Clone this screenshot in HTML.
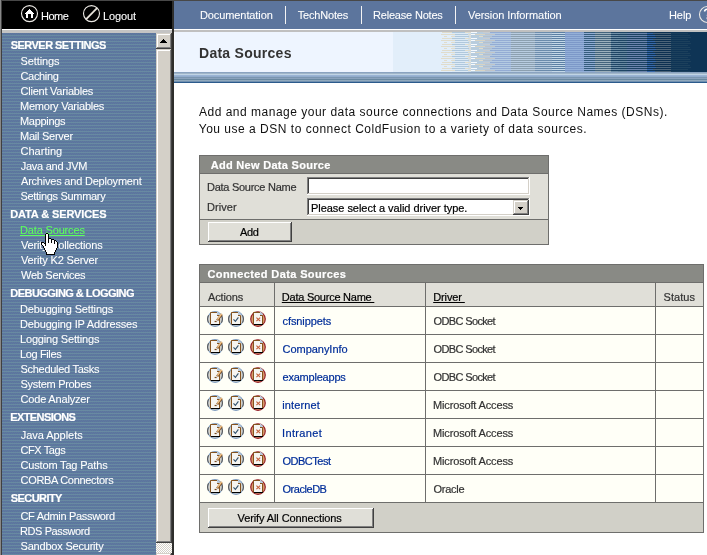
<!DOCTYPE html>
<html><head><meta charset="utf-8"><title>ColdFusion Administrator</title>
<style>
html,body{margin:0;padding:0;}
body{width:707px;height:555px;overflow:hidden;background:#fff;position:relative;font-family:'Liberation Sans',sans-serif;}
#p{position:absolute;left:0;top:0;width:707px;height:555px;overflow:hidden;will-change:transform;}
#p div,#p svg,#p span{position:absolute;}
.t{white-space:pre;}
</style></head><body><div id="p">
<div style="left:0px;top:0px;width:707px;height:1px;background:#484848;"></div>
<div style="left:0px;top:0px;width:1px;height:555px;background:#888888;"></div>
<div style="left:1px;top:0px;width:1px;height:555px;background:#404040;"></div>
<div style="left:2px;top:1px;width:170px;height:28px;background:#000;"></div>
<div style="left:174px;top:1px;width:533px;height:28px;background:#5C759D;"></div>
<div style="left:2px;top:29px;width:170px;height:1px;background:#fff;"></div>
<div style="left:2px;top:30px;width:170px;height:3px;background:#C3C3C3;"></div>
<div style="left:174px;top:29px;width:533px;height:1px;background:#fff;"></div>
<div style="left:174px;top:30px;width:533px;height:2px;background:#C0C0C0;"></div>
<div style="left:172px;top:1px;width:2px;height:554px;background:#2E2E2C;"></div>
<svg style="left:2px;top:33px" width="154" height="522" shape-rendering="crispEdges"><defs><pattern id="sb" width="2" height="6" patternUnits="userSpaceOnUse"><rect x="0" y="0" width="1" height="1" fill="#5B73A1"/><rect x="1" y="0" width="1" height="1" fill="#5F7B9C"/><rect x="0" y="1" width="1" height="1" fill="#5F7B9C"/><rect x="1" y="1" width="1" height="1" fill="#5B73A1"/><rect x="0" y="2" width="1" height="1" fill="#688AA2"/><rect x="1" y="2" width="1" height="1" fill="#688AA2"/><rect x="0" y="3" width="1" height="1" fill="#5F7B9C"/><rect x="1" y="3" width="1" height="1" fill="#5B73A1"/><rect x="0" y="4" width="1" height="1" fill="#5B73A1"/><rect x="1" y="4" width="1" height="1" fill="#5F7B9C"/><rect x="0" y="5" width="1" height="1" fill="#688AA2"/><rect x="1" y="5" width="1" height="1" fill="#688AA2"/></pattern></defs><rect width="154" height="522" fill="url(#sb)"/></svg>
<div style="left:156px;top:33px;width:16px;height:522px;background:#D4D0C8;"></div>
<div style="left:156px;top:543px;width:16px;height:10px;background-color:#fff;background-image:linear-gradient(45deg,#D4D0C8 25%,transparent 25%,transparent 75%,#D4D0C8 75%),linear-gradient(45deg,#D4D0C8 25%,transparent 25%,transparent 75%,#D4D0C8 75%);background-size:2px 2px;background-position:0 0,1px 1px;"></div>
<div style="left:156px;top:33px;width:16px;height:16px;background:#D4D0C8;"></div><div style="left:156px;top:33px;width:15px;height:1px;background:#D4D0C8;"></div><div style="left:156px;top:33px;width:1px;height:15px;background:#D4D0C8;"></div><div style="left:157px;top:34px;width:14px;height:1px;background:#fff;"></div><div style="left:157px;top:34px;width:1px;height:14px;background:#fff;"></div><div style="left:171px;top:33px;width:1px;height:16px;background:#404040;"></div><div style="left:156px;top:48px;width:16px;height:1px;background:#404040;"></div><div style="left:170px;top:34px;width:1px;height:14px;background:#808080;"></div><div style="left:157px;top:47px;width:14px;height:1px;background:#808080;"></div>
<div style="left:156px;top:49px;width:16px;height:494px;background:#D4D0C8;"></div><div style="left:156px;top:49px;width:15px;height:1px;background:#D4D0C8;"></div><div style="left:156px;top:49px;width:1px;height:493px;background:#D4D0C8;"></div><div style="left:157px;top:50px;width:14px;height:1px;background:#fff;"></div><div style="left:157px;top:50px;width:1px;height:492px;background:#fff;"></div><div style="left:171px;top:49px;width:1px;height:494px;background:#404040;"></div><div style="left:156px;top:542px;width:16px;height:1px;background:#404040;"></div><div style="left:170px;top:50px;width:1px;height:492px;background:#808080;"></div><div style="left:157px;top:541px;width:14px;height:1px;background:#808080;"></div>
<div style="left:156px;top:553px;width:16px;height:16px;background:#D4D0C8;"></div><div style="left:156px;top:553px;width:15px;height:1px;background:#D4D0C8;"></div><div style="left:156px;top:553px;width:1px;height:15px;background:#D4D0C8;"></div><div style="left:157px;top:554px;width:14px;height:1px;background:#fff;"></div><div style="left:157px;top:554px;width:1px;height:14px;background:#fff;"></div><div style="left:171px;top:553px;width:1px;height:16px;background:#404040;"></div><div style="left:156px;top:568px;width:16px;height:1px;background:#404040;"></div><div style="left:170px;top:554px;width:1px;height:14px;background:#808080;"></div><div style="left:157px;top:567px;width:14px;height:1px;background:#808080;"></div>
<svg style="left:160px;top:39px" width="8" height="5" shape-rendering="crispEdges"><path d="M3 0h1v1h1v1h1v1h1v1H0V3h1V2h1V1h1z" fill="#000"/></svg>
<div style="left:174px;top:32px;width:533px;height:40px;background:#EEF5FF;"></div>
<div style="left:174px;top:32px;width:1px;height:40px;background:#F8FBFF;"></div>
<div style="left:393px;top:32px;width:48px;height:40px;background:#E2EEFA;"></div>
<svg style="left:441px;top:32px" width="266" height="40" shape-rendering="crispEdges"><rect x="0" y="0" width="1" height="1" fill="#E2EEFA"/><rect x="1" y="0" width="10" height="1" fill="#E0DCCC"/><rect x="11" y="0" width="13" height="1" fill="#B0C8DC"/><rect x="24" y="0" width="6" height="1" fill="#E0DCCC"/><rect x="30" y="0" width="6" height="1" fill="#F6FAFE"/><rect x="36" y="0" width="6" height="1" fill="#B8CCDC"/><rect x="42" y="0" width="7" height="1" fill="#C8CCD0"/><rect x="49" y="0" width="21" height="1" fill="#94ACD4"/><rect x="70" y="0" width="24" height="1" fill="#8CA0B0"/><rect x="94" y="0" width="17" height="1" fill="#6C8CAC"/><rect x="111" y="0" width="13" height="1" fill="#5C80A4"/><rect x="124" y="0" width="19" height="1" fill="#7C98C8"/><rect x="143" y="0" width="11" height="1" fill="#345C7C"/><rect x="154" y="0" width="16" height="1" fill="#44647C"/><rect x="170" y="0" width="16" height="1" fill="#1E4464"/><rect x="186" y="0" width="20" height="1" fill="#1C4262"/><rect x="206" y="0" width="8" height="1" fill="#0E3456"/><rect x="214" y="0" width="16" height="1" fill="#0C3050"/><rect x="230" y="0" width="36" height="1" fill="#0E3455"/><rect x="0" y="1" width="11" height="1" fill="#E2EEFA"/><rect x="11" y="1" width="16" height="1" fill="#DCEAF6"/><rect x="27" y="1" width="3" height="1" fill="#D0E0EE"/><rect x="30" y="1" width="12" height="1" fill="#B8CDDE"/><rect x="42" y="1" width="7" height="1" fill="#B8CADC"/><rect x="49" y="1" width="21" height="1" fill="#B4CAE2"/><rect x="70" y="1" width="24" height="1" fill="#B8CCE0"/><rect x="94" y="1" width="17" height="1" fill="#B4C8DC"/><rect x="111" y="1" width="13" height="1" fill="#C4D8E8"/><rect x="124" y="1" width="19" height="1" fill="#94B0D8"/><rect x="143" y="1" width="11" height="1" fill="#90ACD4"/><rect x="154" y="1" width="16" height="1" fill="#9CB0BC"/><rect x="170" y="1" width="9" height="1" fill="#7090A8"/><rect x="179" y="1" width="7" height="1" fill="#6888A0"/><rect x="186" y="1" width="20" height="1" fill="#6C84AC"/><rect x="206" y="1" width="6" height="1" fill="#3868A8"/><rect x="212" y="1" width="18" height="1" fill="#4C6478"/><rect x="230" y="1" width="17" height="1" fill="#1C405C"/><rect x="247" y="1" width="19" height="1" fill="#0E3455"/><rect x="0" y="2" width="14" height="1" fill="#E0DCCC"/><rect x="14" y="2" width="13" height="1" fill="#B0C8DC"/><rect x="27" y="2" width="3" height="1" fill="#E0DCCC"/><rect x="30" y="2" width="4" height="1" fill="#F6FAFE"/><rect x="34" y="2" width="10" height="1" fill="#D8D4C4"/><rect x="44" y="2" width="10" height="1" fill="#C0C4C8"/><rect x="54" y="2" width="16" height="1" fill="#94ACD4"/><rect x="70" y="2" width="24" height="1" fill="#8CA0B0"/><rect x="94" y="2" width="17" height="1" fill="#6C8CAC"/><rect x="111" y="2" width="13" height="1" fill="#5C80A4"/><rect x="124" y="2" width="19" height="1" fill="#7C98C8"/><rect x="143" y="2" width="11" height="1" fill="#345C7C"/><rect x="154" y="2" width="16" height="1" fill="#44647C"/><rect x="170" y="2" width="16" height="1" fill="#1E4464"/><rect x="186" y="2" width="20" height="1" fill="#1C4262"/><rect x="206" y="2" width="8" height="1" fill="#0E3456"/><rect x="214" y="2" width="16" height="1" fill="#0C3050"/><rect x="230" y="2" width="36" height="1" fill="#0E3455"/><rect x="0" y="3" width="11" height="1" fill="#E2EEFA"/><rect x="11" y="3" width="16" height="1" fill="#DCEAF6"/><rect x="27" y="3" width="3" height="1" fill="#D0E0EE"/><rect x="30" y="3" width="12" height="1" fill="#B8CDDE"/><rect x="42" y="3" width="7" height="1" fill="#B8CADC"/><rect x="49" y="3" width="21" height="1" fill="#B4CAE2"/><rect x="70" y="3" width="24" height="1" fill="#B8CCE0"/><rect x="94" y="3" width="17" height="1" fill="#B4C8DC"/><rect x="111" y="3" width="13" height="1" fill="#C4D8E8"/><rect x="124" y="3" width="19" height="1" fill="#94B0D8"/><rect x="143" y="3" width="11" height="1" fill="#90ACD4"/><rect x="154" y="3" width="16" height="1" fill="#9CB0BC"/><rect x="170" y="3" width="7" height="1" fill="#7090A8"/><rect x="177" y="3" width="9" height="1" fill="#6888A0"/><rect x="186" y="3" width="20" height="1" fill="#6C84AC"/><rect x="206" y="3" width="8" height="1" fill="#3868A8"/><rect x="214" y="3" width="16" height="1" fill="#4C6478"/><rect x="230" y="3" width="19" height="1" fill="#1C405C"/><rect x="249" y="3" width="17" height="1" fill="#0E3455"/><rect x="0" y="4" width="3" height="1" fill="#E2EEFA"/><rect x="3" y="4" width="3" height="1" fill="#E0DCCC"/><rect x="6" y="4" width="4" height="1" fill="#E2EEFA"/><rect x="10" y="4" width="4" height="1" fill="#E0DCCC"/><rect x="14" y="4" width="14" height="1" fill="#B0C8DC"/><rect x="28" y="4" width="2" height="1" fill="#E0DCCC"/><rect x="30" y="4" width="8" height="1" fill="#B8CCDC"/><rect x="38" y="4" width="4" height="1" fill="#E0DCCC"/><rect x="42" y="4" width="9" height="1" fill="#B4C0CC"/><rect x="51" y="4" width="19" height="1" fill="#94ACD4"/><rect x="70" y="4" width="24" height="1" fill="#8CA0B0"/><rect x="94" y="4" width="17" height="1" fill="#6C8CAC"/><rect x="111" y="4" width="13" height="1" fill="#5C80A4"/><rect x="124" y="4" width="19" height="1" fill="#7C98C8"/><rect x="143" y="4" width="11" height="1" fill="#345C7C"/><rect x="154" y="4" width="16" height="1" fill="#44647C"/><rect x="170" y="4" width="16" height="1" fill="#1E4464"/><rect x="186" y="4" width="20" height="1" fill="#1C4262"/><rect x="206" y="4" width="8" height="1" fill="#0E3456"/><rect x="214" y="4" width="16" height="1" fill="#0C3050"/><rect x="230" y="4" width="36" height="1" fill="#0E3455"/><rect x="0" y="5" width="11" height="1" fill="#E2EEFA"/><rect x="11" y="5" width="16" height="1" fill="#DCEAF6"/><rect x="27" y="5" width="3" height="1" fill="#D0E0EE"/><rect x="30" y="5" width="12" height="1" fill="#B8CDDE"/><rect x="42" y="5" width="7" height="1" fill="#B8CADC"/><rect x="49" y="5" width="21" height="1" fill="#B4CAE2"/><rect x="70" y="5" width="24" height="1" fill="#B8CCE0"/><rect x="94" y="5" width="17" height="1" fill="#B4C8DC"/><rect x="111" y="5" width="13" height="1" fill="#C4D8E8"/><rect x="124" y="5" width="19" height="1" fill="#94B0D8"/><rect x="143" y="5" width="11" height="1" fill="#90ACD4"/><rect x="154" y="5" width="16" height="1" fill="#9CB0BC"/><rect x="170" y="5" width="9" height="1" fill="#7090A8"/><rect x="179" y="5" width="7" height="1" fill="#6888A0"/><rect x="186" y="5" width="20" height="1" fill="#6C84AC"/><rect x="206" y="5" width="9" height="1" fill="#3868A8"/><rect x="215" y="5" width="15" height="1" fill="#4C6478"/><rect x="230" y="5" width="20" height="1" fill="#1C405C"/><rect x="250" y="5" width="16" height="1" fill="#0E3455"/><rect x="0" y="6" width="1" height="1" fill="#E2EEFA"/><rect x="1" y="6" width="10" height="1" fill="#E0DCCC"/><rect x="11" y="6" width="13" height="1" fill="#B0C8DC"/><rect x="24" y="6" width="6" height="1" fill="#E0DCCC"/><rect x="30" y="6" width="6" height="1" fill="#F6FAFE"/><rect x="36" y="6" width="6" height="1" fill="#B8CCDC"/><rect x="42" y="6" width="7" height="1" fill="#C8CCD0"/><rect x="49" y="6" width="21" height="1" fill="#94ACD4"/><rect x="70" y="6" width="24" height="1" fill="#8CA0B0"/><rect x="94" y="6" width="17" height="1" fill="#6C8CAC"/><rect x="111" y="6" width="13" height="1" fill="#5C80A4"/><rect x="124" y="6" width="19" height="1" fill="#7C98C8"/><rect x="143" y="6" width="11" height="1" fill="#345C7C"/><rect x="154" y="6" width="16" height="1" fill="#44647C"/><rect x="170" y="6" width="16" height="1" fill="#1E4464"/><rect x="186" y="6" width="20" height="1" fill="#1C4262"/><rect x="206" y="6" width="8" height="1" fill="#0E3456"/><rect x="214" y="6" width="16" height="1" fill="#0C3050"/><rect x="230" y="6" width="36" height="1" fill="#0E3455"/><rect x="0" y="7" width="11" height="1" fill="#E2EEFA"/><rect x="11" y="7" width="16" height="1" fill="#DCEAF6"/><rect x="27" y="7" width="3" height="1" fill="#D0E0EE"/><rect x="30" y="7" width="12" height="1" fill="#B8CDDE"/><rect x="42" y="7" width="7" height="1" fill="#B8CADC"/><rect x="49" y="7" width="21" height="1" fill="#B4CAE2"/><rect x="70" y="7" width="24" height="1" fill="#B8CCE0"/><rect x="94" y="7" width="17" height="1" fill="#B4C8DC"/><rect x="111" y="7" width="13" height="1" fill="#C4D8E8"/><rect x="124" y="7" width="19" height="1" fill="#94B0D8"/><rect x="143" y="7" width="11" height="1" fill="#90ACD4"/><rect x="154" y="7" width="16" height="1" fill="#9CB0BC"/><rect x="170" y="7" width="9" height="1" fill="#7090A8"/><rect x="179" y="7" width="7" height="1" fill="#6888A0"/><rect x="186" y="7" width="20" height="1" fill="#6C84AC"/><rect x="206" y="7" width="6" height="1" fill="#3868A8"/><rect x="212" y="7" width="18" height="1" fill="#4C6478"/><rect x="230" y="7" width="17" height="1" fill="#1C405C"/><rect x="247" y="7" width="19" height="1" fill="#0E3455"/><rect x="0" y="8" width="14" height="1" fill="#E0DCCC"/><rect x="14" y="8" width="13" height="1" fill="#B0C8DC"/><rect x="27" y="8" width="3" height="1" fill="#E0DCCC"/><rect x="30" y="8" width="4" height="1" fill="#F6FAFE"/><rect x="34" y="8" width="10" height="1" fill="#D8D4C4"/><rect x="44" y="8" width="10" height="1" fill="#C0C4C8"/><rect x="54" y="8" width="16" height="1" fill="#94ACD4"/><rect x="70" y="8" width="24" height="1" fill="#8CA0B0"/><rect x="94" y="8" width="17" height="1" fill="#6C8CAC"/><rect x="111" y="8" width="13" height="1" fill="#5C80A4"/><rect x="124" y="8" width="19" height="1" fill="#7C98C8"/><rect x="143" y="8" width="11" height="1" fill="#345C7C"/><rect x="154" y="8" width="16" height="1" fill="#44647C"/><rect x="170" y="8" width="16" height="1" fill="#1E4464"/><rect x="186" y="8" width="20" height="1" fill="#1C4262"/><rect x="206" y="8" width="8" height="1" fill="#0E3456"/><rect x="214" y="8" width="16" height="1" fill="#0C3050"/><rect x="230" y="8" width="36" height="1" fill="#0E3455"/><rect x="0" y="9" width="11" height="1" fill="#E2EEFA"/><rect x="11" y="9" width="16" height="1" fill="#DCEAF6"/><rect x="27" y="9" width="3" height="1" fill="#D0E0EE"/><rect x="30" y="9" width="12" height="1" fill="#B8CDDE"/><rect x="42" y="9" width="7" height="1" fill="#B8CADC"/><rect x="49" y="9" width="21" height="1" fill="#B4CAE2"/><rect x="70" y="9" width="24" height="1" fill="#B8CCE0"/><rect x="94" y="9" width="17" height="1" fill="#B4C8DC"/><rect x="111" y="9" width="13" height="1" fill="#C4D8E8"/><rect x="124" y="9" width="19" height="1" fill="#94B0D8"/><rect x="143" y="9" width="11" height="1" fill="#90ACD4"/><rect x="154" y="9" width="16" height="1" fill="#9CB0BC"/><rect x="170" y="9" width="7" height="1" fill="#7090A8"/><rect x="177" y="9" width="9" height="1" fill="#6888A0"/><rect x="186" y="9" width="20" height="1" fill="#6C84AC"/><rect x="206" y="9" width="8" height="1" fill="#3868A8"/><rect x="214" y="9" width="16" height="1" fill="#4C6478"/><rect x="230" y="9" width="19" height="1" fill="#1C405C"/><rect x="249" y="9" width="17" height="1" fill="#0E3455"/><rect x="0" y="10" width="3" height="1" fill="#E2EEFA"/><rect x="3" y="10" width="3" height="1" fill="#E0DCCC"/><rect x="6" y="10" width="4" height="1" fill="#E2EEFA"/><rect x="10" y="10" width="4" height="1" fill="#E0DCCC"/><rect x="14" y="10" width="14" height="1" fill="#B0C8DC"/><rect x="28" y="10" width="2" height="1" fill="#E0DCCC"/><rect x="30" y="10" width="8" height="1" fill="#B8CCDC"/><rect x="38" y="10" width="4" height="1" fill="#E0DCCC"/><rect x="42" y="10" width="9" height="1" fill="#B4C0CC"/><rect x="51" y="10" width="19" height="1" fill="#94ACD4"/><rect x="70" y="10" width="24" height="1" fill="#8CA0B0"/><rect x="94" y="10" width="17" height="1" fill="#6C8CAC"/><rect x="111" y="10" width="13" height="1" fill="#5C80A4"/><rect x="124" y="10" width="19" height="1" fill="#7C98C8"/><rect x="143" y="10" width="11" height="1" fill="#345C7C"/><rect x="154" y="10" width="16" height="1" fill="#44647C"/><rect x="170" y="10" width="16" height="1" fill="#1E4464"/><rect x="186" y="10" width="20" height="1" fill="#1C4262"/><rect x="206" y="10" width="8" height="1" fill="#0E3456"/><rect x="214" y="10" width="16" height="1" fill="#0C3050"/><rect x="230" y="10" width="36" height="1" fill="#0E3455"/><rect x="0" y="11" width="11" height="1" fill="#E2EEFA"/><rect x="11" y="11" width="16" height="1" fill="#DCEAF6"/><rect x="27" y="11" width="3" height="1" fill="#D0E0EE"/><rect x="30" y="11" width="12" height="1" fill="#B8CDDE"/><rect x="42" y="11" width="7" height="1" fill="#B8CADC"/><rect x="49" y="11" width="21" height="1" fill="#B4CAE2"/><rect x="70" y="11" width="24" height="1" fill="#B8CCE0"/><rect x="94" y="11" width="17" height="1" fill="#B4C8DC"/><rect x="111" y="11" width="13" height="1" fill="#C4D8E8"/><rect x="124" y="11" width="19" height="1" fill="#94B0D8"/><rect x="143" y="11" width="11" height="1" fill="#90ACD4"/><rect x="154" y="11" width="16" height="1" fill="#9CB0BC"/><rect x="170" y="11" width="9" height="1" fill="#7090A8"/><rect x="179" y="11" width="7" height="1" fill="#6888A0"/><rect x="186" y="11" width="20" height="1" fill="#6C84AC"/><rect x="206" y="11" width="9" height="1" fill="#3868A8"/><rect x="215" y="11" width="15" height="1" fill="#4C6478"/><rect x="230" y="11" width="20" height="1" fill="#1C405C"/><rect x="250" y="11" width="16" height="1" fill="#0E3455"/><rect x="0" y="12" width="1" height="1" fill="#E2EEFA"/><rect x="1" y="12" width="10" height="1" fill="#E0DCCC"/><rect x="11" y="12" width="13" height="1" fill="#B0C8DC"/><rect x="24" y="12" width="6" height="1" fill="#E0DCCC"/><rect x="30" y="12" width="6" height="1" fill="#F6FAFE"/><rect x="36" y="12" width="6" height="1" fill="#B8CCDC"/><rect x="42" y="12" width="7" height="1" fill="#C8CCD0"/><rect x="49" y="12" width="21" height="1" fill="#94ACD4"/><rect x="70" y="12" width="24" height="1" fill="#8CA0B0"/><rect x="94" y="12" width="17" height="1" fill="#6C8CAC"/><rect x="111" y="12" width="13" height="1" fill="#5C80A4"/><rect x="124" y="12" width="19" height="1" fill="#7C98C8"/><rect x="143" y="12" width="11" height="1" fill="#345C7C"/><rect x="154" y="12" width="16" height="1" fill="#44647C"/><rect x="170" y="12" width="16" height="1" fill="#1E4464"/><rect x="186" y="12" width="20" height="1" fill="#1C4262"/><rect x="206" y="12" width="8" height="1" fill="#0E3456"/><rect x="214" y="12" width="16" height="1" fill="#0C3050"/><rect x="230" y="12" width="36" height="1" fill="#0E3455"/><rect x="0" y="13" width="11" height="1" fill="#E2EEFA"/><rect x="11" y="13" width="16" height="1" fill="#DCEAF6"/><rect x="27" y="13" width="3" height="1" fill="#D0E0EE"/><rect x="30" y="13" width="12" height="1" fill="#B8CDDE"/><rect x="42" y="13" width="7" height="1" fill="#B8CADC"/><rect x="49" y="13" width="21" height="1" fill="#B4CAE2"/><rect x="70" y="13" width="24" height="1" fill="#B8CCE0"/><rect x="94" y="13" width="17" height="1" fill="#B4C8DC"/><rect x="111" y="13" width="13" height="1" fill="#C4D8E8"/><rect x="124" y="13" width="19" height="1" fill="#94B0D8"/><rect x="143" y="13" width="11" height="1" fill="#90ACD4"/><rect x="154" y="13" width="16" height="1" fill="#9CB0BC"/><rect x="170" y="13" width="9" height="1" fill="#7090A8"/><rect x="179" y="13" width="7" height="1" fill="#6888A0"/><rect x="186" y="13" width="20" height="1" fill="#6C84AC"/><rect x="206" y="13" width="6" height="1" fill="#3868A8"/><rect x="212" y="13" width="18" height="1" fill="#4C6478"/><rect x="230" y="13" width="17" height="1" fill="#1C405C"/><rect x="247" y="13" width="19" height="1" fill="#0E3455"/><rect x="0" y="14" width="14" height="1" fill="#E0DCCC"/><rect x="14" y="14" width="13" height="1" fill="#B0C8DC"/><rect x="27" y="14" width="3" height="1" fill="#E0DCCC"/><rect x="30" y="14" width="4" height="1" fill="#F6FAFE"/><rect x="34" y="14" width="10" height="1" fill="#D8D4C4"/><rect x="44" y="14" width="10" height="1" fill="#C0C4C8"/><rect x="54" y="14" width="16" height="1" fill="#94ACD4"/><rect x="70" y="14" width="24" height="1" fill="#8CA0B0"/><rect x="94" y="14" width="17" height="1" fill="#6C8CAC"/><rect x="111" y="14" width="13" height="1" fill="#5C80A4"/><rect x="124" y="14" width="19" height="1" fill="#7C98C8"/><rect x="143" y="14" width="11" height="1" fill="#345C7C"/><rect x="154" y="14" width="16" height="1" fill="#44647C"/><rect x="170" y="14" width="16" height="1" fill="#1E4464"/><rect x="186" y="14" width="20" height="1" fill="#1C4262"/><rect x="206" y="14" width="8" height="1" fill="#0E3456"/><rect x="214" y="14" width="16" height="1" fill="#0C3050"/><rect x="230" y="14" width="36" height="1" fill="#0E3455"/><rect x="0" y="15" width="11" height="1" fill="#E2EEFA"/><rect x="11" y="15" width="16" height="1" fill="#DCEAF6"/><rect x="27" y="15" width="3" height="1" fill="#D0E0EE"/><rect x="30" y="15" width="12" height="1" fill="#B8CDDE"/><rect x="42" y="15" width="7" height="1" fill="#B8CADC"/><rect x="49" y="15" width="21" height="1" fill="#B4CAE2"/><rect x="70" y="15" width="24" height="1" fill="#B8CCE0"/><rect x="94" y="15" width="17" height="1" fill="#B4C8DC"/><rect x="111" y="15" width="13" height="1" fill="#C4D8E8"/><rect x="124" y="15" width="19" height="1" fill="#94B0D8"/><rect x="143" y="15" width="11" height="1" fill="#90ACD4"/><rect x="154" y="15" width="16" height="1" fill="#9CB0BC"/><rect x="170" y="15" width="7" height="1" fill="#7090A8"/><rect x="177" y="15" width="9" height="1" fill="#6888A0"/><rect x="186" y="15" width="20" height="1" fill="#6C84AC"/><rect x="206" y="15" width="8" height="1" fill="#3868A8"/><rect x="214" y="15" width="16" height="1" fill="#4C6478"/><rect x="230" y="15" width="19" height="1" fill="#1C405C"/><rect x="249" y="15" width="17" height="1" fill="#0E3455"/><rect x="0" y="16" width="3" height="1" fill="#E2EEFA"/><rect x="3" y="16" width="3" height="1" fill="#E0DCCC"/><rect x="6" y="16" width="4" height="1" fill="#E2EEFA"/><rect x="10" y="16" width="4" height="1" fill="#E0DCCC"/><rect x="14" y="16" width="14" height="1" fill="#B0C8DC"/><rect x="28" y="16" width="2" height="1" fill="#E0DCCC"/><rect x="30" y="16" width="8" height="1" fill="#B8CCDC"/><rect x="38" y="16" width="4" height="1" fill="#E0DCCC"/><rect x="42" y="16" width="9" height="1" fill="#B4C0CC"/><rect x="51" y="16" width="19" height="1" fill="#94ACD4"/><rect x="70" y="16" width="24" height="1" fill="#8CA0B0"/><rect x="94" y="16" width="17" height="1" fill="#6C8CAC"/><rect x="111" y="16" width="13" height="1" fill="#5C80A4"/><rect x="124" y="16" width="19" height="1" fill="#7C98C8"/><rect x="143" y="16" width="11" height="1" fill="#345C7C"/><rect x="154" y="16" width="16" height="1" fill="#44647C"/><rect x="170" y="16" width="16" height="1" fill="#1E4464"/><rect x="186" y="16" width="20" height="1" fill="#1C4262"/><rect x="206" y="16" width="8" height="1" fill="#0E3456"/><rect x="214" y="16" width="16" height="1" fill="#0C3050"/><rect x="230" y="16" width="36" height="1" fill="#0E3455"/><rect x="0" y="17" width="11" height="1" fill="#E2EEFA"/><rect x="11" y="17" width="16" height="1" fill="#DCEAF6"/><rect x="27" y="17" width="3" height="1" fill="#D0E0EE"/><rect x="30" y="17" width="12" height="1" fill="#B8CDDE"/><rect x="42" y="17" width="7" height="1" fill="#B8CADC"/><rect x="49" y="17" width="21" height="1" fill="#B4CAE2"/><rect x="70" y="17" width="24" height="1" fill="#B8CCE0"/><rect x="94" y="17" width="17" height="1" fill="#B4C8DC"/><rect x="111" y="17" width="13" height="1" fill="#C4D8E8"/><rect x="124" y="17" width="19" height="1" fill="#94B0D8"/><rect x="143" y="17" width="11" height="1" fill="#90ACD4"/><rect x="154" y="17" width="16" height="1" fill="#9CB0BC"/><rect x="170" y="17" width="9" height="1" fill="#7090A8"/><rect x="179" y="17" width="7" height="1" fill="#6888A0"/><rect x="186" y="17" width="20" height="1" fill="#6C84AC"/><rect x="206" y="17" width="9" height="1" fill="#3868A8"/><rect x="215" y="17" width="15" height="1" fill="#4C6478"/><rect x="230" y="17" width="20" height="1" fill="#1C405C"/><rect x="250" y="17" width="16" height="1" fill="#0E3455"/><rect x="0" y="18" width="1" height="1" fill="#E2EEFA"/><rect x="1" y="18" width="10" height="1" fill="#E0DCCC"/><rect x="11" y="18" width="13" height="1" fill="#B0C8DC"/><rect x="24" y="18" width="6" height="1" fill="#E0DCCC"/><rect x="30" y="18" width="6" height="1" fill="#F6FAFE"/><rect x="36" y="18" width="6" height="1" fill="#B8CCDC"/><rect x="42" y="18" width="7" height="1" fill="#C8CCD0"/><rect x="49" y="18" width="21" height="1" fill="#94ACD4"/><rect x="70" y="18" width="24" height="1" fill="#8CA0B0"/><rect x="94" y="18" width="17" height="1" fill="#6C8CAC"/><rect x="111" y="18" width="13" height="1" fill="#5C80A4"/><rect x="124" y="18" width="19" height="1" fill="#7C98C8"/><rect x="143" y="18" width="11" height="1" fill="#345C7C"/><rect x="154" y="18" width="16" height="1" fill="#44647C"/><rect x="170" y="18" width="16" height="1" fill="#1E4464"/><rect x="186" y="18" width="20" height="1" fill="#1C4262"/><rect x="206" y="18" width="8" height="1" fill="#0E3456"/><rect x="214" y="18" width="16" height="1" fill="#0C3050"/><rect x="230" y="18" width="36" height="1" fill="#0E3455"/><rect x="0" y="19" width="11" height="1" fill="#E2EEFA"/><rect x="11" y="19" width="16" height="1" fill="#DCEAF6"/><rect x="27" y="19" width="3" height="1" fill="#D0E0EE"/><rect x="30" y="19" width="12" height="1" fill="#B8CDDE"/><rect x="42" y="19" width="7" height="1" fill="#B8CADC"/><rect x="49" y="19" width="21" height="1" fill="#B4CAE2"/><rect x="70" y="19" width="24" height="1" fill="#B8CCE0"/><rect x="94" y="19" width="17" height="1" fill="#B4C8DC"/><rect x="111" y="19" width="13" height="1" fill="#C4D8E8"/><rect x="124" y="19" width="19" height="1" fill="#94B0D8"/><rect x="143" y="19" width="11" height="1" fill="#90ACD4"/><rect x="154" y="19" width="16" height="1" fill="#9CB0BC"/><rect x="170" y="19" width="9" height="1" fill="#7090A8"/><rect x="179" y="19" width="7" height="1" fill="#6888A0"/><rect x="186" y="19" width="20" height="1" fill="#6C84AC"/><rect x="206" y="19" width="6" height="1" fill="#3868A8"/><rect x="212" y="19" width="18" height="1" fill="#4C6478"/><rect x="230" y="19" width="17" height="1" fill="#1C405C"/><rect x="247" y="19" width="19" height="1" fill="#0E3455"/><rect x="0" y="20" width="14" height="1" fill="#E0DCCC"/><rect x="14" y="20" width="13" height="1" fill="#B0C8DC"/><rect x="27" y="20" width="3" height="1" fill="#E0DCCC"/><rect x="30" y="20" width="4" height="1" fill="#F6FAFE"/><rect x="34" y="20" width="10" height="1" fill="#D8D4C4"/><rect x="44" y="20" width="10" height="1" fill="#C0C4C8"/><rect x="54" y="20" width="16" height="1" fill="#94ACD4"/><rect x="70" y="20" width="24" height="1" fill="#8CA0B0"/><rect x="94" y="20" width="17" height="1" fill="#6C8CAC"/><rect x="111" y="20" width="13" height="1" fill="#5C80A4"/><rect x="124" y="20" width="19" height="1" fill="#7C98C8"/><rect x="143" y="20" width="11" height="1" fill="#345C7C"/><rect x="154" y="20" width="16" height="1" fill="#44647C"/><rect x="170" y="20" width="16" height="1" fill="#1E4464"/><rect x="186" y="20" width="20" height="1" fill="#1C4262"/><rect x="206" y="20" width="8" height="1" fill="#0E3456"/><rect x="214" y="20" width="16" height="1" fill="#0C3050"/><rect x="230" y="20" width="36" height="1" fill="#0E3455"/><rect x="0" y="21" width="11" height="1" fill="#E2EEFA"/><rect x="11" y="21" width="16" height="1" fill="#DCEAF6"/><rect x="27" y="21" width="3" height="1" fill="#D0E0EE"/><rect x="30" y="21" width="12" height="1" fill="#B8CDDE"/><rect x="42" y="21" width="7" height="1" fill="#B8CADC"/><rect x="49" y="21" width="21" height="1" fill="#B4CAE2"/><rect x="70" y="21" width="24" height="1" fill="#B8CCE0"/><rect x="94" y="21" width="17" height="1" fill="#B4C8DC"/><rect x="111" y="21" width="13" height="1" fill="#C4D8E8"/><rect x="124" y="21" width="19" height="1" fill="#94B0D8"/><rect x="143" y="21" width="11" height="1" fill="#90ACD4"/><rect x="154" y="21" width="16" height="1" fill="#9CB0BC"/><rect x="170" y="21" width="7" height="1" fill="#7090A8"/><rect x="177" y="21" width="9" height="1" fill="#6888A0"/><rect x="186" y="21" width="20" height="1" fill="#6C84AC"/><rect x="206" y="21" width="8" height="1" fill="#3868A8"/><rect x="214" y="21" width="16" height="1" fill="#4C6478"/><rect x="230" y="21" width="19" height="1" fill="#1C405C"/><rect x="249" y="21" width="17" height="1" fill="#0E3455"/><rect x="0" y="22" width="3" height="1" fill="#E2EEFA"/><rect x="3" y="22" width="3" height="1" fill="#E0DCCC"/><rect x="6" y="22" width="4" height="1" fill="#E2EEFA"/><rect x="10" y="22" width="4" height="1" fill="#E0DCCC"/><rect x="14" y="22" width="14" height="1" fill="#B0C8DC"/><rect x="28" y="22" width="2" height="1" fill="#E0DCCC"/><rect x="30" y="22" width="8" height="1" fill="#B8CCDC"/><rect x="38" y="22" width="4" height="1" fill="#E0DCCC"/><rect x="42" y="22" width="9" height="1" fill="#B4C0CC"/><rect x="51" y="22" width="19" height="1" fill="#94ACD4"/><rect x="70" y="22" width="24" height="1" fill="#8CA0B0"/><rect x="94" y="22" width="17" height="1" fill="#6C8CAC"/><rect x="111" y="22" width="13" height="1" fill="#5C80A4"/><rect x="124" y="22" width="19" height="1" fill="#7C98C8"/><rect x="143" y="22" width="11" height="1" fill="#345C7C"/><rect x="154" y="22" width="16" height="1" fill="#44647C"/><rect x="170" y="22" width="16" height="1" fill="#1E4464"/><rect x="186" y="22" width="20" height="1" fill="#1C4262"/><rect x="206" y="22" width="8" height="1" fill="#0E3456"/><rect x="214" y="22" width="16" height="1" fill="#0C3050"/><rect x="230" y="22" width="36" height="1" fill="#0E3455"/><rect x="0" y="23" width="11" height="1" fill="#E2EEFA"/><rect x="11" y="23" width="16" height="1" fill="#DCEAF6"/><rect x="27" y="23" width="3" height="1" fill="#D0E0EE"/><rect x="30" y="23" width="12" height="1" fill="#B8CDDE"/><rect x="42" y="23" width="7" height="1" fill="#B8CADC"/><rect x="49" y="23" width="21" height="1" fill="#B4CAE2"/><rect x="70" y="23" width="24" height="1" fill="#B8CCE0"/><rect x="94" y="23" width="17" height="1" fill="#B4C8DC"/><rect x="111" y="23" width="13" height="1" fill="#C4D8E8"/><rect x="124" y="23" width="19" height="1" fill="#94B0D8"/><rect x="143" y="23" width="11" height="1" fill="#90ACD4"/><rect x="154" y="23" width="16" height="1" fill="#9CB0BC"/><rect x="170" y="23" width="9" height="1" fill="#7090A8"/><rect x="179" y="23" width="7" height="1" fill="#6888A0"/><rect x="186" y="23" width="20" height="1" fill="#6C84AC"/><rect x="206" y="23" width="9" height="1" fill="#3868A8"/><rect x="215" y="23" width="15" height="1" fill="#4C6478"/><rect x="230" y="23" width="20" height="1" fill="#1C405C"/><rect x="250" y="23" width="16" height="1" fill="#0E3455"/><rect x="0" y="24" width="1" height="1" fill="#E2EEFA"/><rect x="1" y="24" width="10" height="1" fill="#E0DCCC"/><rect x="11" y="24" width="13" height="1" fill="#B0C8DC"/><rect x="24" y="24" width="6" height="1" fill="#E0DCCC"/><rect x="30" y="24" width="6" height="1" fill="#F6FAFE"/><rect x="36" y="24" width="6" height="1" fill="#B8CCDC"/><rect x="42" y="24" width="7" height="1" fill="#C8CCD0"/><rect x="49" y="24" width="21" height="1" fill="#94ACD4"/><rect x="70" y="24" width="24" height="1" fill="#8CA0B0"/><rect x="94" y="24" width="17" height="1" fill="#6C8CAC"/><rect x="111" y="24" width="13" height="1" fill="#5C80A4"/><rect x="124" y="24" width="19" height="1" fill="#7C98C8"/><rect x="143" y="24" width="11" height="1" fill="#345C7C"/><rect x="154" y="24" width="16" height="1" fill="#44647C"/><rect x="170" y="24" width="16" height="1" fill="#1E4464"/><rect x="186" y="24" width="20" height="1" fill="#1C4262"/><rect x="206" y="24" width="8" height="1" fill="#0E3456"/><rect x="214" y="24" width="16" height="1" fill="#0C3050"/><rect x="230" y="24" width="36" height="1" fill="#0E3455"/><rect x="0" y="25" width="11" height="1" fill="#E2EEFA"/><rect x="11" y="25" width="16" height="1" fill="#DCEAF6"/><rect x="27" y="25" width="3" height="1" fill="#D0E0EE"/><rect x="30" y="25" width="12" height="1" fill="#B8CDDE"/><rect x="42" y="25" width="7" height="1" fill="#B8CADC"/><rect x="49" y="25" width="21" height="1" fill="#B4CAE2"/><rect x="70" y="25" width="24" height="1" fill="#B8CCE0"/><rect x="94" y="25" width="17" height="1" fill="#B4C8DC"/><rect x="111" y="25" width="13" height="1" fill="#C4D8E8"/><rect x="124" y="25" width="19" height="1" fill="#94B0D8"/><rect x="143" y="25" width="11" height="1" fill="#90ACD4"/><rect x="154" y="25" width="16" height="1" fill="#9CB0BC"/><rect x="170" y="25" width="9" height="1" fill="#7090A8"/><rect x="179" y="25" width="7" height="1" fill="#6888A0"/><rect x="186" y="25" width="20" height="1" fill="#6C84AC"/><rect x="206" y="25" width="6" height="1" fill="#3868A8"/><rect x="212" y="25" width="18" height="1" fill="#4C6478"/><rect x="230" y="25" width="17" height="1" fill="#1C405C"/><rect x="247" y="25" width="19" height="1" fill="#0E3455"/><rect x="0" y="26" width="14" height="1" fill="#E0DCCC"/><rect x="14" y="26" width="13" height="1" fill="#B0C8DC"/><rect x="27" y="26" width="3" height="1" fill="#E0DCCC"/><rect x="30" y="26" width="4" height="1" fill="#F6FAFE"/><rect x="34" y="26" width="10" height="1" fill="#D8D4C4"/><rect x="44" y="26" width="10" height="1" fill="#C0C4C8"/><rect x="54" y="26" width="16" height="1" fill="#94ACD4"/><rect x="70" y="26" width="24" height="1" fill="#8CA0B0"/><rect x="94" y="26" width="17" height="1" fill="#6C8CAC"/><rect x="111" y="26" width="13" height="1" fill="#5C80A4"/><rect x="124" y="26" width="19" height="1" fill="#7C98C8"/><rect x="143" y="26" width="11" height="1" fill="#345C7C"/><rect x="154" y="26" width="16" height="1" fill="#44647C"/><rect x="170" y="26" width="16" height="1" fill="#1E4464"/><rect x="186" y="26" width="20" height="1" fill="#1C4262"/><rect x="206" y="26" width="8" height="1" fill="#0E3456"/><rect x="214" y="26" width="16" height="1" fill="#0C3050"/><rect x="230" y="26" width="36" height="1" fill="#0E3455"/><rect x="0" y="27" width="11" height="1" fill="#E2EEFA"/><rect x="11" y="27" width="16" height="1" fill="#DCEAF6"/><rect x="27" y="27" width="3" height="1" fill="#D0E0EE"/><rect x="30" y="27" width="12" height="1" fill="#B8CDDE"/><rect x="42" y="27" width="7" height="1" fill="#B8CADC"/><rect x="49" y="27" width="21" height="1" fill="#B4CAE2"/><rect x="70" y="27" width="24" height="1" fill="#B8CCE0"/><rect x="94" y="27" width="17" height="1" fill="#B4C8DC"/><rect x="111" y="27" width="13" height="1" fill="#C4D8E8"/><rect x="124" y="27" width="19" height="1" fill="#94B0D8"/><rect x="143" y="27" width="11" height="1" fill="#90ACD4"/><rect x="154" y="27" width="16" height="1" fill="#9CB0BC"/><rect x="170" y="27" width="7" height="1" fill="#7090A8"/><rect x="177" y="27" width="9" height="1" fill="#6888A0"/><rect x="186" y="27" width="20" height="1" fill="#6C84AC"/><rect x="206" y="27" width="8" height="1" fill="#3868A8"/><rect x="214" y="27" width="16" height="1" fill="#4C6478"/><rect x="230" y="27" width="19" height="1" fill="#1C405C"/><rect x="249" y="27" width="17" height="1" fill="#0E3455"/><rect x="0" y="28" width="3" height="1" fill="#E2EEFA"/><rect x="3" y="28" width="3" height="1" fill="#E0DCCC"/><rect x="6" y="28" width="4" height="1" fill="#E2EEFA"/><rect x="10" y="28" width="4" height="1" fill="#E0DCCC"/><rect x="14" y="28" width="14" height="1" fill="#B0C8DC"/><rect x="28" y="28" width="2" height="1" fill="#E0DCCC"/><rect x="30" y="28" width="8" height="1" fill="#B8CCDC"/><rect x="38" y="28" width="4" height="1" fill="#E0DCCC"/><rect x="42" y="28" width="9" height="1" fill="#B4C0CC"/><rect x="51" y="28" width="19" height="1" fill="#94ACD4"/><rect x="70" y="28" width="24" height="1" fill="#8CA0B0"/><rect x="94" y="28" width="17" height="1" fill="#6C8CAC"/><rect x="111" y="28" width="13" height="1" fill="#5C80A4"/><rect x="124" y="28" width="19" height="1" fill="#7C98C8"/><rect x="143" y="28" width="11" height="1" fill="#345C7C"/><rect x="154" y="28" width="16" height="1" fill="#44647C"/><rect x="170" y="28" width="16" height="1" fill="#1E4464"/><rect x="186" y="28" width="20" height="1" fill="#1C4262"/><rect x="206" y="28" width="8" height="1" fill="#0E3456"/><rect x="214" y="28" width="16" height="1" fill="#0C3050"/><rect x="230" y="28" width="36" height="1" fill="#0E3455"/><rect x="0" y="29" width="11" height="1" fill="#E2EEFA"/><rect x="11" y="29" width="16" height="1" fill="#DCEAF6"/><rect x="27" y="29" width="3" height="1" fill="#D0E0EE"/><rect x="30" y="29" width="12" height="1" fill="#B8CDDE"/><rect x="42" y="29" width="7" height="1" fill="#B8CADC"/><rect x="49" y="29" width="21" height="1" fill="#B4CAE2"/><rect x="70" y="29" width="24" height="1" fill="#B8CCE0"/><rect x="94" y="29" width="17" height="1" fill="#B4C8DC"/><rect x="111" y="29" width="13" height="1" fill="#C4D8E8"/><rect x="124" y="29" width="19" height="1" fill="#94B0D8"/><rect x="143" y="29" width="11" height="1" fill="#90ACD4"/><rect x="154" y="29" width="16" height="1" fill="#9CB0BC"/><rect x="170" y="29" width="9" height="1" fill="#7090A8"/><rect x="179" y="29" width="7" height="1" fill="#6888A0"/><rect x="186" y="29" width="20" height="1" fill="#6C84AC"/><rect x="206" y="29" width="9" height="1" fill="#3868A8"/><rect x="215" y="29" width="15" height="1" fill="#4C6478"/><rect x="230" y="29" width="20" height="1" fill="#1C405C"/><rect x="250" y="29" width="16" height="1" fill="#0E3455"/><rect x="0" y="30" width="1" height="1" fill="#E2EEFA"/><rect x="1" y="30" width="10" height="1" fill="#E0DCCC"/><rect x="11" y="30" width="13" height="1" fill="#B0C8DC"/><rect x="24" y="30" width="6" height="1" fill="#E0DCCC"/><rect x="30" y="30" width="6" height="1" fill="#F6FAFE"/><rect x="36" y="30" width="6" height="1" fill="#B8CCDC"/><rect x="42" y="30" width="7" height="1" fill="#C8CCD0"/><rect x="49" y="30" width="21" height="1" fill="#94ACD4"/><rect x="70" y="30" width="24" height="1" fill="#8CA0B0"/><rect x="94" y="30" width="17" height="1" fill="#6C8CAC"/><rect x="111" y="30" width="13" height="1" fill="#5C80A4"/><rect x="124" y="30" width="19" height="1" fill="#7C98C8"/><rect x="143" y="30" width="11" height="1" fill="#345C7C"/><rect x="154" y="30" width="16" height="1" fill="#44647C"/><rect x="170" y="30" width="16" height="1" fill="#1E4464"/><rect x="186" y="30" width="20" height="1" fill="#1C4262"/><rect x="206" y="30" width="8" height="1" fill="#0E3456"/><rect x="214" y="30" width="16" height="1" fill="#0C3050"/><rect x="230" y="30" width="36" height="1" fill="#0E3455"/><rect x="0" y="31" width="11" height="1" fill="#E2EEFA"/><rect x="11" y="31" width="16" height="1" fill="#DCEAF6"/><rect x="27" y="31" width="3" height="1" fill="#D0E0EE"/><rect x="30" y="31" width="12" height="1" fill="#B8CDDE"/><rect x="42" y="31" width="7" height="1" fill="#B8CADC"/><rect x="49" y="31" width="21" height="1" fill="#B4CAE2"/><rect x="70" y="31" width="24" height="1" fill="#B8CCE0"/><rect x="94" y="31" width="17" height="1" fill="#B4C8DC"/><rect x="111" y="31" width="13" height="1" fill="#C4D8E8"/><rect x="124" y="31" width="19" height="1" fill="#94B0D8"/><rect x="143" y="31" width="11" height="1" fill="#90ACD4"/><rect x="154" y="31" width="16" height="1" fill="#9CB0BC"/><rect x="170" y="31" width="9" height="1" fill="#7090A8"/><rect x="179" y="31" width="7" height="1" fill="#6888A0"/><rect x="186" y="31" width="20" height="1" fill="#6C84AC"/><rect x="206" y="31" width="6" height="1" fill="#3868A8"/><rect x="212" y="31" width="18" height="1" fill="#4C6478"/><rect x="230" y="31" width="17" height="1" fill="#1C405C"/><rect x="247" y="31" width="19" height="1" fill="#0E3455"/><rect x="0" y="32" width="14" height="1" fill="#E0DCCC"/><rect x="14" y="32" width="13" height="1" fill="#B0C8DC"/><rect x="27" y="32" width="3" height="1" fill="#E0DCCC"/><rect x="30" y="32" width="4" height="1" fill="#F6FAFE"/><rect x="34" y="32" width="10" height="1" fill="#D8D4C4"/><rect x="44" y="32" width="10" height="1" fill="#C0C4C8"/><rect x="54" y="32" width="16" height="1" fill="#94ACD4"/><rect x="70" y="32" width="24" height="1" fill="#8CA0B0"/><rect x="94" y="32" width="17" height="1" fill="#6C8CAC"/><rect x="111" y="32" width="13" height="1" fill="#5C80A4"/><rect x="124" y="32" width="19" height="1" fill="#7C98C8"/><rect x="143" y="32" width="11" height="1" fill="#345C7C"/><rect x="154" y="32" width="16" height="1" fill="#44647C"/><rect x="170" y="32" width="16" height="1" fill="#1E4464"/><rect x="186" y="32" width="20" height="1" fill="#1C4262"/><rect x="206" y="32" width="8" height="1" fill="#0E3456"/><rect x="214" y="32" width="16" height="1" fill="#0C3050"/><rect x="230" y="32" width="36" height="1" fill="#0E3455"/><rect x="0" y="33" width="11" height="1" fill="#E2EEFA"/><rect x="11" y="33" width="16" height="1" fill="#DCEAF6"/><rect x="27" y="33" width="3" height="1" fill="#D0E0EE"/><rect x="30" y="33" width="12" height="1" fill="#B8CDDE"/><rect x="42" y="33" width="7" height="1" fill="#B8CADC"/><rect x="49" y="33" width="21" height="1" fill="#B4CAE2"/><rect x="70" y="33" width="24" height="1" fill="#B8CCE0"/><rect x="94" y="33" width="17" height="1" fill="#B4C8DC"/><rect x="111" y="33" width="13" height="1" fill="#C4D8E8"/><rect x="124" y="33" width="19" height="1" fill="#94B0D8"/><rect x="143" y="33" width="11" height="1" fill="#90ACD4"/><rect x="154" y="33" width="16" height="1" fill="#9CB0BC"/><rect x="170" y="33" width="7" height="1" fill="#7090A8"/><rect x="177" y="33" width="9" height="1" fill="#6888A0"/><rect x="186" y="33" width="20" height="1" fill="#6C84AC"/><rect x="206" y="33" width="8" height="1" fill="#3868A8"/><rect x="214" y="33" width="16" height="1" fill="#4C6478"/><rect x="230" y="33" width="19" height="1" fill="#1C405C"/><rect x="249" y="33" width="17" height="1" fill="#0E3455"/><rect x="0" y="34" width="3" height="1" fill="#E2EEFA"/><rect x="3" y="34" width="3" height="1" fill="#E0DCCC"/><rect x="6" y="34" width="4" height="1" fill="#E2EEFA"/><rect x="10" y="34" width="4" height="1" fill="#E0DCCC"/><rect x="14" y="34" width="14" height="1" fill="#B0C8DC"/><rect x="28" y="34" width="2" height="1" fill="#E0DCCC"/><rect x="30" y="34" width="8" height="1" fill="#B8CCDC"/><rect x="38" y="34" width="4" height="1" fill="#E0DCCC"/><rect x="42" y="34" width="9" height="1" fill="#B4C0CC"/><rect x="51" y="34" width="19" height="1" fill="#94ACD4"/><rect x="70" y="34" width="24" height="1" fill="#8CA0B0"/><rect x="94" y="34" width="17" height="1" fill="#6C8CAC"/><rect x="111" y="34" width="13" height="1" fill="#5C80A4"/><rect x="124" y="34" width="19" height="1" fill="#7C98C8"/><rect x="143" y="34" width="11" height="1" fill="#345C7C"/><rect x="154" y="34" width="16" height="1" fill="#44647C"/><rect x="170" y="34" width="16" height="1" fill="#1E4464"/><rect x="186" y="34" width="20" height="1" fill="#1C4262"/><rect x="206" y="34" width="8" height="1" fill="#0E3456"/><rect x="214" y="34" width="16" height="1" fill="#0C3050"/><rect x="230" y="34" width="36" height="1" fill="#0E3455"/><rect x="0" y="35" width="11" height="1" fill="#E2EEFA"/><rect x="11" y="35" width="16" height="1" fill="#DCEAF6"/><rect x="27" y="35" width="3" height="1" fill="#D0E0EE"/><rect x="30" y="35" width="12" height="1" fill="#B8CDDE"/><rect x="42" y="35" width="7" height="1" fill="#B8CADC"/><rect x="49" y="35" width="21" height="1" fill="#B4CAE2"/><rect x="70" y="35" width="24" height="1" fill="#B8CCE0"/><rect x="94" y="35" width="17" height="1" fill="#B4C8DC"/><rect x="111" y="35" width="13" height="1" fill="#C4D8E8"/><rect x="124" y="35" width="19" height="1" fill="#94B0D8"/><rect x="143" y="35" width="11" height="1" fill="#90ACD4"/><rect x="154" y="35" width="16" height="1" fill="#9CB0BC"/><rect x="170" y="35" width="9" height="1" fill="#7090A8"/><rect x="179" y="35" width="7" height="1" fill="#6888A0"/><rect x="186" y="35" width="20" height="1" fill="#6C84AC"/><rect x="206" y="35" width="9" height="1" fill="#3868A8"/><rect x="215" y="35" width="15" height="1" fill="#4C6478"/><rect x="230" y="35" width="20" height="1" fill="#1C405C"/><rect x="250" y="35" width="16" height="1" fill="#0E3455"/><rect x="0" y="36" width="1" height="1" fill="#E2EEFA"/><rect x="1" y="36" width="10" height="1" fill="#E0DCCC"/><rect x="11" y="36" width="13" height="1" fill="#B0C8DC"/><rect x="24" y="36" width="6" height="1" fill="#E0DCCC"/><rect x="30" y="36" width="6" height="1" fill="#F6FAFE"/><rect x="36" y="36" width="6" height="1" fill="#B8CCDC"/><rect x="42" y="36" width="7" height="1" fill="#C8CCD0"/><rect x="49" y="36" width="21" height="1" fill="#94ACD4"/><rect x="70" y="36" width="24" height="1" fill="#8CA0B0"/><rect x="94" y="36" width="17" height="1" fill="#6C8CAC"/><rect x="111" y="36" width="13" height="1" fill="#5C80A4"/><rect x="124" y="36" width="19" height="1" fill="#7C98C8"/><rect x="143" y="36" width="11" height="1" fill="#345C7C"/><rect x="154" y="36" width="16" height="1" fill="#44647C"/><rect x="170" y="36" width="16" height="1" fill="#1E4464"/><rect x="186" y="36" width="20" height="1" fill="#1C4262"/><rect x="206" y="36" width="8" height="1" fill="#0E3456"/><rect x="214" y="36" width="16" height="1" fill="#0C3050"/><rect x="230" y="36" width="36" height="1" fill="#0E3455"/><rect x="0" y="37" width="11" height="1" fill="#E2EEFA"/><rect x="11" y="37" width="16" height="1" fill="#DCEAF6"/><rect x="27" y="37" width="3" height="1" fill="#D0E0EE"/><rect x="30" y="37" width="12" height="1" fill="#B8CDDE"/><rect x="42" y="37" width="7" height="1" fill="#B8CADC"/><rect x="49" y="37" width="21" height="1" fill="#B4CAE2"/><rect x="70" y="37" width="24" height="1" fill="#B8CCE0"/><rect x="94" y="37" width="17" height="1" fill="#B4C8DC"/><rect x="111" y="37" width="13" height="1" fill="#C4D8E8"/><rect x="124" y="37" width="19" height="1" fill="#94B0D8"/><rect x="143" y="37" width="11" height="1" fill="#90ACD4"/><rect x="154" y="37" width="16" height="1" fill="#9CB0BC"/><rect x="170" y="37" width="9" height="1" fill="#7090A8"/><rect x="179" y="37" width="7" height="1" fill="#6888A0"/><rect x="186" y="37" width="20" height="1" fill="#6C84AC"/><rect x="206" y="37" width="6" height="1" fill="#3868A8"/><rect x="212" y="37" width="18" height="1" fill="#4C6478"/><rect x="230" y="37" width="17" height="1" fill="#1C405C"/><rect x="247" y="37" width="19" height="1" fill="#0E3455"/><rect x="0" y="38" width="14" height="1" fill="#E0DCCC"/><rect x="14" y="38" width="13" height="1" fill="#B0C8DC"/><rect x="27" y="38" width="3" height="1" fill="#E0DCCC"/><rect x="30" y="38" width="4" height="1" fill="#F6FAFE"/><rect x="34" y="38" width="10" height="1" fill="#D8D4C4"/><rect x="44" y="38" width="10" height="1" fill="#C0C4C8"/><rect x="54" y="38" width="16" height="1" fill="#94ACD4"/><rect x="70" y="38" width="24" height="1" fill="#8CA0B0"/><rect x="94" y="38" width="17" height="1" fill="#6C8CAC"/><rect x="111" y="38" width="13" height="1" fill="#5C80A4"/><rect x="124" y="38" width="19" height="1" fill="#7C98C8"/><rect x="143" y="38" width="11" height="1" fill="#345C7C"/><rect x="154" y="38" width="16" height="1" fill="#44647C"/><rect x="170" y="38" width="16" height="1" fill="#1E4464"/><rect x="186" y="38" width="20" height="1" fill="#1C4262"/><rect x="206" y="38" width="8" height="1" fill="#0E3456"/><rect x="214" y="38" width="16" height="1" fill="#0C3050"/><rect x="230" y="38" width="36" height="1" fill="#0E3455"/><rect x="0" y="39" width="11" height="1" fill="#E2EEFA"/><rect x="11" y="39" width="16" height="1" fill="#DCEAF6"/><rect x="27" y="39" width="3" height="1" fill="#D0E0EE"/><rect x="30" y="39" width="12" height="1" fill="#B8CDDE"/><rect x="42" y="39" width="7" height="1" fill="#B8CADC"/><rect x="49" y="39" width="21" height="1" fill="#B4CAE2"/><rect x="70" y="39" width="24" height="1" fill="#B8CCE0"/><rect x="94" y="39" width="17" height="1" fill="#B4C8DC"/><rect x="111" y="39" width="13" height="1" fill="#C4D8E8"/><rect x="124" y="39" width="19" height="1" fill="#94B0D8"/><rect x="143" y="39" width="11" height="1" fill="#90ACD4"/><rect x="154" y="39" width="16" height="1" fill="#9CB0BC"/><rect x="170" y="39" width="7" height="1" fill="#7090A8"/><rect x="177" y="39" width="9" height="1" fill="#6888A0"/><rect x="186" y="39" width="20" height="1" fill="#6C84AC"/><rect x="206" y="39" width="8" height="1" fill="#3868A8"/><rect x="214" y="39" width="16" height="1" fill="#4C6478"/><rect x="230" y="39" width="19" height="1" fill="#1C405C"/><rect x="249" y="39" width="17" height="1" fill="#0E3455"/></svg>
<div style="left:174px;top:72px;width:533px;height:1px;background:#8AA3C0;"></div>
<div style="left:174px;top:73px;width:533px;height:1px;background:#A0B5C8;"></div>
<div style="left:174px;top:74px;width:533px;height:1px;background:#C0D4E4;"></div>
<div style="left:174px;top:75px;width:533px;height:1px;background:#9AB4D4;"></div>
<div style="left:174px;top:76px;width:533px;height:1px;background:#92ACCC;"></div>
<div style="left:174px;top:77px;width:533px;height:1px;background:#7A96B0;"></div>
<div style="left:174px;top:78px;width:533px;height:1px;background:#8AA2BC;"></div>
<div style="left:174px;top:79px;width:533px;height:1px;background:#6888A0;"></div>
<div style="left:174px;top:80px;width:533px;height:1px;background:#90A8BC;"></div>
<div style="left:174px;top:81px;width:533px;height:1px;background:#7090B0;"></div>
<div style="left:174px;top:82px;width:533px;height:1px;background:#2B5A8C;"></div>
<div style="left:199px;top:155px;width:350px;height:90px;background:#6E6E6C;"></div>
<div style="left:200px;top:156px;width:348px;height:17px;background:#898A85;"></div>
<div style="left:200px;top:174px;width:348px;height:45px;background:#E0DFD8;"></div>
<div style="left:200px;top:220px;width:348px;height:24px;background:#D1D0C8;"></div>
<div style="left:307px;top:177px;width:223px;height:18px;background:#fff;"></div><div style="left:307px;top:177px;width:222px;height:1px;background:#808080;"></div><div style="left:307px;top:177px;width:1px;height:17px;background:#808080;"></div><div style="left:308px;top:178px;width:220px;height:1px;background:#404040;"></div><div style="left:308px;top:178px;width:1px;height:15px;background:#404040;"></div><div style="left:308px;top:193px;width:221px;height:1px;background:#D4D0C8;"></div><div style="left:528px;top:178px;width:1px;height:16px;background:#D4D0C8;"></div>
<div style="left:307px;top:198px;width:223px;height:18px;background:#fff;"></div><div style="left:307px;top:198px;width:222px;height:1px;background:#808080;"></div><div style="left:307px;top:198px;width:1px;height:17px;background:#808080;"></div><div style="left:308px;top:199px;width:220px;height:1px;background:#404040;"></div><div style="left:308px;top:199px;width:1px;height:15px;background:#404040;"></div><div style="left:308px;top:214px;width:221px;height:1px;background:#D4D0C8;"></div><div style="left:528px;top:199px;width:1px;height:16px;background:#D4D0C8;"></div>
<div style="left:513px;top:200px;width:16px;height:15px;background:#D4D0C8;"></div><div style="left:513px;top:200px;width:15px;height:1px;background:#D4D0C8;"></div><div style="left:513px;top:200px;width:1px;height:14px;background:#D4D0C8;"></div><div style="left:514px;top:201px;width:14px;height:1px;background:#fff;"></div><div style="left:514px;top:201px;width:1px;height:13px;background:#fff;"></div><div style="left:528px;top:200px;width:1px;height:15px;background:#404040;"></div><div style="left:513px;top:214px;width:16px;height:1px;background:#404040;"></div><div style="left:527px;top:201px;width:1px;height:13px;background:#808080;"></div><div style="left:514px;top:213px;width:14px;height:1px;background:#808080;"></div>
<svg style="left:518px;top:207px" width="5" height="3" shape-rendering="crispEdges"><path d="M0 0h5v1H4v1H3v1H2V2H1V1H0z" fill="#000"/></svg>
<div style="left:208px;top:222px;width:84px;height:20px;background:#E0DFD8;"></div><div style="left:208px;top:222px;width:83px;height:1px;background:#fff;"></div><div style="left:208px;top:222px;width:1px;height:19px;background:#fff;"></div><div style="left:291px;top:222px;width:1px;height:20px;background:#404040;"></div><div style="left:208px;top:241px;width:84px;height:1px;background:#404040;"></div><div style="left:290px;top:223px;width:1px;height:18px;background:#808080;"></div><div style="left:209px;top:240px;width:82px;height:1px;background:#808080;"></div>
<div style="left:199px;top:264px;width:505px;height:269px;background:#6E6E6C;"></div>
<div style="left:200px;top:265px;width:503px;height:17px;background:#898A85;"></div>
<div style="left:200px;top:283px;width:74px;height:23px;background:#E0DFD8;"></div>
<div style="left:200px;top:307px;width:74px;height:27px;background:#FFFFF7;"></div>
<div style="left:200px;top:335px;width:74px;height:27px;background:#FFFFF7;"></div>
<div style="left:200px;top:363px;width:74px;height:27px;background:#FFFFF7;"></div>
<div style="left:200px;top:391px;width:74px;height:27px;background:#FFFFF7;"></div>
<div style="left:200px;top:419px;width:74px;height:27px;background:#FFFFF7;"></div>
<div style="left:200px;top:447px;width:74px;height:27px;background:#FFFFF7;"></div>
<div style="left:200px;top:475px;width:74px;height:27px;background:#FFFFF7;"></div>
<div style="left:275px;top:283px;width:150px;height:23px;background:#E0DFD8;"></div>
<div style="left:275px;top:307px;width:150px;height:27px;background:#FFFFF7;"></div>
<div style="left:275px;top:335px;width:150px;height:27px;background:#FFFFF7;"></div>
<div style="left:275px;top:363px;width:150px;height:27px;background:#FFFFF7;"></div>
<div style="left:275px;top:391px;width:150px;height:27px;background:#FFFFF7;"></div>
<div style="left:275px;top:419px;width:150px;height:27px;background:#FFFFF7;"></div>
<div style="left:275px;top:447px;width:150px;height:27px;background:#FFFFF7;"></div>
<div style="left:275px;top:475px;width:150px;height:27px;background:#FFFFF7;"></div>
<div style="left:426px;top:283px;width:229px;height:23px;background:#E0DFD8;"></div>
<div style="left:426px;top:307px;width:229px;height:27px;background:#FFFFF7;"></div>
<div style="left:426px;top:335px;width:229px;height:27px;background:#FFFFF7;"></div>
<div style="left:426px;top:363px;width:229px;height:27px;background:#FFFFF7;"></div>
<div style="left:426px;top:391px;width:229px;height:27px;background:#FFFFF7;"></div>
<div style="left:426px;top:419px;width:229px;height:27px;background:#FFFFF7;"></div>
<div style="left:426px;top:447px;width:229px;height:27px;background:#FFFFF7;"></div>
<div style="left:426px;top:475px;width:229px;height:27px;background:#FFFFF7;"></div>
<div style="left:656px;top:283px;width:47px;height:23px;background:#E0DFD8;"></div>
<div style="left:656px;top:307px;width:47px;height:27px;background:#FFFFF7;"></div>
<div style="left:656px;top:335px;width:47px;height:27px;background:#FFFFF7;"></div>
<div style="left:656px;top:363px;width:47px;height:27px;background:#FFFFF7;"></div>
<div style="left:656px;top:391px;width:47px;height:27px;background:#FFFFF7;"></div>
<div style="left:656px;top:419px;width:47px;height:27px;background:#FFFFF7;"></div>
<div style="left:656px;top:447px;width:47px;height:27px;background:#FFFFF7;"></div>
<div style="left:656px;top:475px;width:47px;height:27px;background:#FFFFF7;"></div>
<div style="left:200px;top:503px;width:503px;height:29px;background:#D1D0C8;"></div>
<div style="left:208px;top:508px;width:166px;height:20px;background:#E0DFD8;"></div><div style="left:208px;top:508px;width:165px;height:1px;background:#fff;"></div><div style="left:208px;top:508px;width:1px;height:19px;background:#fff;"></div><div style="left:373px;top:508px;width:1px;height:20px;background:#404040;"></div><div style="left:208px;top:527px;width:166px;height:1px;background:#404040;"></div><div style="left:372px;top:509px;width:1px;height:18px;background:#808080;"></div><div style="left:209px;top:526px;width:164px;height:1px;background:#808080;"></div>
<div style="left:285px;top:6px;width:1px;height:18px;background:#F4F4F4;"></div>
<div style="left:361px;top:6px;width:1px;height:18px;background:#F4F4F4;"></div>
<div style="left:455px;top:6px;width:1px;height:18px;background:#F4F4F4;"></div>
<svg style="left:20px;top:4px" width="19" height="19"><circle cx="9.5" cy="9.6" r="8" fill="none" stroke="#ECE9E4" stroke-width="1.1"/></svg>
<svg style="left:25px;top:9px" width="9" height="9" shape-rendering="crispEdges"><rect x="4" y="0" width="1" height="1" fill="#fff"/><rect x="3" y="1" width="3" height="1" fill="#fff"/><rect x="2" y="2" width="5" height="1" fill="#fff"/><rect x="1" y="3" width="7" height="1" fill="#fff"/><rect x="0" y="4" width="9" height="1" fill="#fff"/><rect x="1" y="5" width="2" height="1" fill="#fff"/><rect x="6" y="5" width="2" height="1" fill="#fff"/><rect x="1" y="6" width="2" height="1" fill="#fff"/><rect x="6" y="6" width="2" height="1" fill="#fff"/><rect x="1" y="7" width="2" height="1" fill="#fff"/><rect x="6" y="7" width="2" height="1" fill="#fff"/><rect x="1" y="8" width="2" height="1" fill="#fff"/><rect x="6" y="8" width="2" height="1" fill="#fff"/></svg>
<svg style="left:82px;top:4px" width="19" height="19"><circle cx="9.5" cy="9.6" r="8" fill="none" stroke="#ECE9E4" stroke-width="1.1"/><path d="M4.2 15.2L15 4.2" stroke="#E8E4DC" stroke-width="1.8"/></svg>
<svg style="left:698px;top:5px" width="19" height="19"><circle cx="9.5" cy="9.5" r="8" fill="none" stroke="#ECE9E4" stroke-width="1.1"/><path d="M6.6 6.6c0-1.6 1.4-2.4 2.9-2.4s2.9.9 2.9 2.4c0 1.8-2.9 2-2.9 4.2" fill="none" stroke="#fff" stroke-width="1.6"/><rect x="8.6" y="12.3" width="1.8" height="1.8" fill="#fff"/></svg>
<svg style="left:207px;top:311px" width="16" height="16"><circle cx="8" cy="8" r="7.4" fill="#D6D3CA" stroke="#7F9DC0" stroke-width="1.1"/><path d="M1.6 4.3A7.4 7.4 0 0 0 1.6 11.7" fill="none" stroke="#5E5E5E" stroke-width="1.1"/><path d="M14.4 4.3A7.4 7.4 0 0 1 14.4 11.7" fill="none" stroke="#5E5E5E" stroke-width="1.1"/><path d="M3.5 13.5V1.5H10" fill="none" stroke="#84531F" stroke-width="1"/><rect x="4" y="2" width="8" height="11" fill="#F6F5F1"/><path d="M10 1h1l2 2v1h-3z" fill="#B9CADB"/><path d="M10 4.5h2.5V13" fill="none" stroke="#84531F" stroke-width="1"/><rect x="4" y="13" width="9" height="1" fill="#000"/><path d="M14.8 3.2L10.2 9.4" stroke="#7A4A1C" stroke-width="2.4"/><path d="M14.6 2.8L10.4 8.6" stroke="#F2C58A" stroke-width="1.5"/><path d="M7.6 10.5h2.2" stroke="#7A4A1C" stroke-width="1.2"/><path d="M10 9.2l-.8 1.6 1.8-.8z" fill="#C8C8C8"/></svg>
<svg style="left:228px;top:311px" width="16" height="16"><circle cx="8" cy="8" r="7.4" fill="#D6D3CA" stroke="#7F9DC0" stroke-width="1.1"/><path d="M1.6 4.3A7.4 7.4 0 0 0 1.6 11.7" fill="none" stroke="#5E5E5E" stroke-width="1.1"/><path d="M14.4 4.3A7.4 7.4 0 0 1 14.4 11.7" fill="none" stroke="#5E5E5E" stroke-width="1.1"/><path d="M3.5 13.5V1.5H10" fill="none" stroke="#84531F" stroke-width="1"/><rect x="4" y="2" width="8" height="11" fill="#F6F5F1"/><path d="M10 1h1l2 2v1h-3z" fill="#B9CADB"/><path d="M10 4.5h2.5V13" fill="none" stroke="#84531F" stroke-width="1"/><rect x="4" y="13" width="9" height="1" fill="#000"/><path d="M5.5 8.3L7.4 10.3L10.4 6.3" fill="none" stroke="#34546F" stroke-width="1.15"/></svg>
<svg style="left:250px;top:311px" width="16" height="16"><circle cx="8" cy="8" r="7.3" fill="#D69869" stroke="#96202A" stroke-width="1.15"/><path d="M3.5 13.5V1.5H10" fill="none" stroke="#84531F" stroke-width="1"/><rect x="4" y="2" width="8" height="11" fill="#F6F5F1"/><path d="M10 1h1l2 2v1h-3z" fill="#B9CADB"/><path d="M10 4.5h2.5V13" fill="none" stroke="#84531F" stroke-width="1"/><rect x="4" y="13" width="9" height="1" fill="#000"/><path d="M6.4 6.6L10.2 10.2M10.2 6.6L6.4 10.2" stroke="#C4603A" stroke-width="1.1"/></svg>
<svg style="left:207px;top:339px" width="16" height="16"><circle cx="8" cy="8" r="7.4" fill="#D6D3CA" stroke="#7F9DC0" stroke-width="1.1"/><path d="M1.6 4.3A7.4 7.4 0 0 0 1.6 11.7" fill="none" stroke="#5E5E5E" stroke-width="1.1"/><path d="M14.4 4.3A7.4 7.4 0 0 1 14.4 11.7" fill="none" stroke="#5E5E5E" stroke-width="1.1"/><path d="M3.5 13.5V1.5H10" fill="none" stroke="#84531F" stroke-width="1"/><rect x="4" y="2" width="8" height="11" fill="#F6F5F1"/><path d="M10 1h1l2 2v1h-3z" fill="#B9CADB"/><path d="M10 4.5h2.5V13" fill="none" stroke="#84531F" stroke-width="1"/><rect x="4" y="13" width="9" height="1" fill="#000"/><path d="M14.8 3.2L10.2 9.4" stroke="#7A4A1C" stroke-width="2.4"/><path d="M14.6 2.8L10.4 8.6" stroke="#F2C58A" stroke-width="1.5"/><path d="M7.6 10.5h2.2" stroke="#7A4A1C" stroke-width="1.2"/><path d="M10 9.2l-.8 1.6 1.8-.8z" fill="#C8C8C8"/></svg>
<svg style="left:228px;top:339px" width="16" height="16"><circle cx="8" cy="8" r="7.4" fill="#D6D3CA" stroke="#7F9DC0" stroke-width="1.1"/><path d="M1.6 4.3A7.4 7.4 0 0 0 1.6 11.7" fill="none" stroke="#5E5E5E" stroke-width="1.1"/><path d="M14.4 4.3A7.4 7.4 0 0 1 14.4 11.7" fill="none" stroke="#5E5E5E" stroke-width="1.1"/><path d="M3.5 13.5V1.5H10" fill="none" stroke="#84531F" stroke-width="1"/><rect x="4" y="2" width="8" height="11" fill="#F6F5F1"/><path d="M10 1h1l2 2v1h-3z" fill="#B9CADB"/><path d="M10 4.5h2.5V13" fill="none" stroke="#84531F" stroke-width="1"/><rect x="4" y="13" width="9" height="1" fill="#000"/><path d="M5.5 8.3L7.4 10.3L10.4 6.3" fill="none" stroke="#34546F" stroke-width="1.15"/></svg>
<svg style="left:250px;top:339px" width="16" height="16"><circle cx="8" cy="8" r="7.3" fill="#D69869" stroke="#96202A" stroke-width="1.15"/><path d="M3.5 13.5V1.5H10" fill="none" stroke="#84531F" stroke-width="1"/><rect x="4" y="2" width="8" height="11" fill="#F6F5F1"/><path d="M10 1h1l2 2v1h-3z" fill="#B9CADB"/><path d="M10 4.5h2.5V13" fill="none" stroke="#84531F" stroke-width="1"/><rect x="4" y="13" width="9" height="1" fill="#000"/><path d="M6.4 6.6L10.2 10.2M10.2 6.6L6.4 10.2" stroke="#C4603A" stroke-width="1.1"/></svg>
<svg style="left:207px;top:367px" width="16" height="16"><circle cx="8" cy="8" r="7.4" fill="#D6D3CA" stroke="#7F9DC0" stroke-width="1.1"/><path d="M1.6 4.3A7.4 7.4 0 0 0 1.6 11.7" fill="none" stroke="#5E5E5E" stroke-width="1.1"/><path d="M14.4 4.3A7.4 7.4 0 0 1 14.4 11.7" fill="none" stroke="#5E5E5E" stroke-width="1.1"/><path d="M3.5 13.5V1.5H10" fill="none" stroke="#84531F" stroke-width="1"/><rect x="4" y="2" width="8" height="11" fill="#F6F5F1"/><path d="M10 1h1l2 2v1h-3z" fill="#B9CADB"/><path d="M10 4.5h2.5V13" fill="none" stroke="#84531F" stroke-width="1"/><rect x="4" y="13" width="9" height="1" fill="#000"/><path d="M14.8 3.2L10.2 9.4" stroke="#7A4A1C" stroke-width="2.4"/><path d="M14.6 2.8L10.4 8.6" stroke="#F2C58A" stroke-width="1.5"/><path d="M7.6 10.5h2.2" stroke="#7A4A1C" stroke-width="1.2"/><path d="M10 9.2l-.8 1.6 1.8-.8z" fill="#C8C8C8"/></svg>
<svg style="left:228px;top:367px" width="16" height="16"><circle cx="8" cy="8" r="7.4" fill="#D6D3CA" stroke="#7F9DC0" stroke-width="1.1"/><path d="M1.6 4.3A7.4 7.4 0 0 0 1.6 11.7" fill="none" stroke="#5E5E5E" stroke-width="1.1"/><path d="M14.4 4.3A7.4 7.4 0 0 1 14.4 11.7" fill="none" stroke="#5E5E5E" stroke-width="1.1"/><path d="M3.5 13.5V1.5H10" fill="none" stroke="#84531F" stroke-width="1"/><rect x="4" y="2" width="8" height="11" fill="#F6F5F1"/><path d="M10 1h1l2 2v1h-3z" fill="#B9CADB"/><path d="M10 4.5h2.5V13" fill="none" stroke="#84531F" stroke-width="1"/><rect x="4" y="13" width="9" height="1" fill="#000"/><path d="M5.5 8.3L7.4 10.3L10.4 6.3" fill="none" stroke="#34546F" stroke-width="1.15"/></svg>
<svg style="left:250px;top:367px" width="16" height="16"><circle cx="8" cy="8" r="7.3" fill="#D69869" stroke="#96202A" stroke-width="1.15"/><path d="M3.5 13.5V1.5H10" fill="none" stroke="#84531F" stroke-width="1"/><rect x="4" y="2" width="8" height="11" fill="#F6F5F1"/><path d="M10 1h1l2 2v1h-3z" fill="#B9CADB"/><path d="M10 4.5h2.5V13" fill="none" stroke="#84531F" stroke-width="1"/><rect x="4" y="13" width="9" height="1" fill="#000"/><path d="M6.4 6.6L10.2 10.2M10.2 6.6L6.4 10.2" stroke="#C4603A" stroke-width="1.1"/></svg>
<svg style="left:207px;top:395px" width="16" height="16"><circle cx="8" cy="8" r="7.4" fill="#D6D3CA" stroke="#7F9DC0" stroke-width="1.1"/><path d="M1.6 4.3A7.4 7.4 0 0 0 1.6 11.7" fill="none" stroke="#5E5E5E" stroke-width="1.1"/><path d="M14.4 4.3A7.4 7.4 0 0 1 14.4 11.7" fill="none" stroke="#5E5E5E" stroke-width="1.1"/><path d="M3.5 13.5V1.5H10" fill="none" stroke="#84531F" stroke-width="1"/><rect x="4" y="2" width="8" height="11" fill="#F6F5F1"/><path d="M10 1h1l2 2v1h-3z" fill="#B9CADB"/><path d="M10 4.5h2.5V13" fill="none" stroke="#84531F" stroke-width="1"/><rect x="4" y="13" width="9" height="1" fill="#000"/><path d="M14.8 3.2L10.2 9.4" stroke="#7A4A1C" stroke-width="2.4"/><path d="M14.6 2.8L10.4 8.6" stroke="#F2C58A" stroke-width="1.5"/><path d="M7.6 10.5h2.2" stroke="#7A4A1C" stroke-width="1.2"/><path d="M10 9.2l-.8 1.6 1.8-.8z" fill="#C8C8C8"/></svg>
<svg style="left:228px;top:395px" width="16" height="16"><circle cx="8" cy="8" r="7.4" fill="#D6D3CA" stroke="#7F9DC0" stroke-width="1.1"/><path d="M1.6 4.3A7.4 7.4 0 0 0 1.6 11.7" fill="none" stroke="#5E5E5E" stroke-width="1.1"/><path d="M14.4 4.3A7.4 7.4 0 0 1 14.4 11.7" fill="none" stroke="#5E5E5E" stroke-width="1.1"/><path d="M3.5 13.5V1.5H10" fill="none" stroke="#84531F" stroke-width="1"/><rect x="4" y="2" width="8" height="11" fill="#F6F5F1"/><path d="M10 1h1l2 2v1h-3z" fill="#B9CADB"/><path d="M10 4.5h2.5V13" fill="none" stroke="#84531F" stroke-width="1"/><rect x="4" y="13" width="9" height="1" fill="#000"/><path d="M5.5 8.3L7.4 10.3L10.4 6.3" fill="none" stroke="#34546F" stroke-width="1.15"/></svg>
<svg style="left:250px;top:395px" width="16" height="16"><circle cx="8" cy="8" r="7.3" fill="#D69869" stroke="#96202A" stroke-width="1.15"/><path d="M3.5 13.5V1.5H10" fill="none" stroke="#84531F" stroke-width="1"/><rect x="4" y="2" width="8" height="11" fill="#F6F5F1"/><path d="M10 1h1l2 2v1h-3z" fill="#B9CADB"/><path d="M10 4.5h2.5V13" fill="none" stroke="#84531F" stroke-width="1"/><rect x="4" y="13" width="9" height="1" fill="#000"/><path d="M6.4 6.6L10.2 10.2M10.2 6.6L6.4 10.2" stroke="#C4603A" stroke-width="1.1"/></svg>
<svg style="left:207px;top:423px" width="16" height="16"><circle cx="8" cy="8" r="7.4" fill="#D6D3CA" stroke="#7F9DC0" stroke-width="1.1"/><path d="M1.6 4.3A7.4 7.4 0 0 0 1.6 11.7" fill="none" stroke="#5E5E5E" stroke-width="1.1"/><path d="M14.4 4.3A7.4 7.4 0 0 1 14.4 11.7" fill="none" stroke="#5E5E5E" stroke-width="1.1"/><path d="M3.5 13.5V1.5H10" fill="none" stroke="#84531F" stroke-width="1"/><rect x="4" y="2" width="8" height="11" fill="#F6F5F1"/><path d="M10 1h1l2 2v1h-3z" fill="#B9CADB"/><path d="M10 4.5h2.5V13" fill="none" stroke="#84531F" stroke-width="1"/><rect x="4" y="13" width="9" height="1" fill="#000"/><path d="M14.8 3.2L10.2 9.4" stroke="#7A4A1C" stroke-width="2.4"/><path d="M14.6 2.8L10.4 8.6" stroke="#F2C58A" stroke-width="1.5"/><path d="M7.6 10.5h2.2" stroke="#7A4A1C" stroke-width="1.2"/><path d="M10 9.2l-.8 1.6 1.8-.8z" fill="#C8C8C8"/></svg>
<svg style="left:228px;top:423px" width="16" height="16"><circle cx="8" cy="8" r="7.4" fill="#D6D3CA" stroke="#7F9DC0" stroke-width="1.1"/><path d="M1.6 4.3A7.4 7.4 0 0 0 1.6 11.7" fill="none" stroke="#5E5E5E" stroke-width="1.1"/><path d="M14.4 4.3A7.4 7.4 0 0 1 14.4 11.7" fill="none" stroke="#5E5E5E" stroke-width="1.1"/><path d="M3.5 13.5V1.5H10" fill="none" stroke="#84531F" stroke-width="1"/><rect x="4" y="2" width="8" height="11" fill="#F6F5F1"/><path d="M10 1h1l2 2v1h-3z" fill="#B9CADB"/><path d="M10 4.5h2.5V13" fill="none" stroke="#84531F" stroke-width="1"/><rect x="4" y="13" width="9" height="1" fill="#000"/><path d="M5.5 8.3L7.4 10.3L10.4 6.3" fill="none" stroke="#34546F" stroke-width="1.15"/></svg>
<svg style="left:250px;top:423px" width="16" height="16"><circle cx="8" cy="8" r="7.3" fill="#D69869" stroke="#96202A" stroke-width="1.15"/><path d="M3.5 13.5V1.5H10" fill="none" stroke="#84531F" stroke-width="1"/><rect x="4" y="2" width="8" height="11" fill="#F6F5F1"/><path d="M10 1h1l2 2v1h-3z" fill="#B9CADB"/><path d="M10 4.5h2.5V13" fill="none" stroke="#84531F" stroke-width="1"/><rect x="4" y="13" width="9" height="1" fill="#000"/><path d="M6.4 6.6L10.2 10.2M10.2 6.6L6.4 10.2" stroke="#C4603A" stroke-width="1.1"/></svg>
<svg style="left:207px;top:451px" width="16" height="16"><circle cx="8" cy="8" r="7.4" fill="#D6D3CA" stroke="#7F9DC0" stroke-width="1.1"/><path d="M1.6 4.3A7.4 7.4 0 0 0 1.6 11.7" fill="none" stroke="#5E5E5E" stroke-width="1.1"/><path d="M14.4 4.3A7.4 7.4 0 0 1 14.4 11.7" fill="none" stroke="#5E5E5E" stroke-width="1.1"/><path d="M3.5 13.5V1.5H10" fill="none" stroke="#84531F" stroke-width="1"/><rect x="4" y="2" width="8" height="11" fill="#F6F5F1"/><path d="M10 1h1l2 2v1h-3z" fill="#B9CADB"/><path d="M10 4.5h2.5V13" fill="none" stroke="#84531F" stroke-width="1"/><rect x="4" y="13" width="9" height="1" fill="#000"/><path d="M14.8 3.2L10.2 9.4" stroke="#7A4A1C" stroke-width="2.4"/><path d="M14.6 2.8L10.4 8.6" stroke="#F2C58A" stroke-width="1.5"/><path d="M7.6 10.5h2.2" stroke="#7A4A1C" stroke-width="1.2"/><path d="M10 9.2l-.8 1.6 1.8-.8z" fill="#C8C8C8"/></svg>
<svg style="left:228px;top:451px" width="16" height="16"><circle cx="8" cy="8" r="7.4" fill="#D6D3CA" stroke="#7F9DC0" stroke-width="1.1"/><path d="M1.6 4.3A7.4 7.4 0 0 0 1.6 11.7" fill="none" stroke="#5E5E5E" stroke-width="1.1"/><path d="M14.4 4.3A7.4 7.4 0 0 1 14.4 11.7" fill="none" stroke="#5E5E5E" stroke-width="1.1"/><path d="M3.5 13.5V1.5H10" fill="none" stroke="#84531F" stroke-width="1"/><rect x="4" y="2" width="8" height="11" fill="#F6F5F1"/><path d="M10 1h1l2 2v1h-3z" fill="#B9CADB"/><path d="M10 4.5h2.5V13" fill="none" stroke="#84531F" stroke-width="1"/><rect x="4" y="13" width="9" height="1" fill="#000"/><path d="M5.5 8.3L7.4 10.3L10.4 6.3" fill="none" stroke="#34546F" stroke-width="1.15"/></svg>
<svg style="left:250px;top:451px" width="16" height="16"><circle cx="8" cy="8" r="7.3" fill="#D69869" stroke="#96202A" stroke-width="1.15"/><path d="M3.5 13.5V1.5H10" fill="none" stroke="#84531F" stroke-width="1"/><rect x="4" y="2" width="8" height="11" fill="#F6F5F1"/><path d="M10 1h1l2 2v1h-3z" fill="#B9CADB"/><path d="M10 4.5h2.5V13" fill="none" stroke="#84531F" stroke-width="1"/><rect x="4" y="13" width="9" height="1" fill="#000"/><path d="M6.4 6.6L10.2 10.2M10.2 6.6L6.4 10.2" stroke="#C4603A" stroke-width="1.1"/></svg>
<svg style="left:207px;top:479px" width="16" height="16"><circle cx="8" cy="8" r="7.4" fill="#D6D3CA" stroke="#7F9DC0" stroke-width="1.1"/><path d="M1.6 4.3A7.4 7.4 0 0 0 1.6 11.7" fill="none" stroke="#5E5E5E" stroke-width="1.1"/><path d="M14.4 4.3A7.4 7.4 0 0 1 14.4 11.7" fill="none" stroke="#5E5E5E" stroke-width="1.1"/><path d="M3.5 13.5V1.5H10" fill="none" stroke="#84531F" stroke-width="1"/><rect x="4" y="2" width="8" height="11" fill="#F6F5F1"/><path d="M10 1h1l2 2v1h-3z" fill="#B9CADB"/><path d="M10 4.5h2.5V13" fill="none" stroke="#84531F" stroke-width="1"/><rect x="4" y="13" width="9" height="1" fill="#000"/><path d="M14.8 3.2L10.2 9.4" stroke="#7A4A1C" stroke-width="2.4"/><path d="M14.6 2.8L10.4 8.6" stroke="#F2C58A" stroke-width="1.5"/><path d="M7.6 10.5h2.2" stroke="#7A4A1C" stroke-width="1.2"/><path d="M10 9.2l-.8 1.6 1.8-.8z" fill="#C8C8C8"/></svg>
<svg style="left:228px;top:479px" width="16" height="16"><circle cx="8" cy="8" r="7.4" fill="#D6D3CA" stroke="#7F9DC0" stroke-width="1.1"/><path d="M1.6 4.3A7.4 7.4 0 0 0 1.6 11.7" fill="none" stroke="#5E5E5E" stroke-width="1.1"/><path d="M14.4 4.3A7.4 7.4 0 0 1 14.4 11.7" fill="none" stroke="#5E5E5E" stroke-width="1.1"/><path d="M3.5 13.5V1.5H10" fill="none" stroke="#84531F" stroke-width="1"/><rect x="4" y="2" width="8" height="11" fill="#F6F5F1"/><path d="M10 1h1l2 2v1h-3z" fill="#B9CADB"/><path d="M10 4.5h2.5V13" fill="none" stroke="#84531F" stroke-width="1"/><rect x="4" y="13" width="9" height="1" fill="#000"/><path d="M5.5 8.3L7.4 10.3L10.4 6.3" fill="none" stroke="#34546F" stroke-width="1.15"/></svg>
<svg style="left:250px;top:479px" width="16" height="16"><circle cx="8" cy="8" r="7.3" fill="#D69869" stroke="#96202A" stroke-width="1.15"/><path d="M3.5 13.5V1.5H10" fill="none" stroke="#84531F" stroke-width="1"/><rect x="4" y="2" width="8" height="11" fill="#F6F5F1"/><path d="M10 1h1l2 2v1h-3z" fill="#B9CADB"/><path d="M10 4.5h2.5V13" fill="none" stroke="#84531F" stroke-width="1"/><rect x="4" y="13" width="9" height="1" fill="#000"/><path d="M6.4 6.6L10.2 10.2M10.2 6.6L6.4 10.2" stroke="#C4603A" stroke-width="1.1"/></svg>
<span class="t" style="left:41.0px;top:10px;font-size:11px;line-height:13px;color:#fff;-webkit-text-stroke:0.08px;letter-spacing:-0.5px;">Home</span>
<span class="t" style="left:103.0px;top:10px;font-size:11px;line-height:13px;color:#fff;-webkit-text-stroke:0.08px;letter-spacing:-0.1px;">Logout</span>
<span class="t" style="left:200.0px;top:9px;font-size:11px;line-height:13px;color:#fff;-webkit-text-stroke:0.08px;letter-spacing:-0.1px;">Documentation</span>
<span class="t" style="left:297.75px;top:9px;font-size:11px;line-height:13px;color:#fff;-webkit-text-stroke:0.08px;letter-spacing:-0.19px;">TechNotes</span>
<span class="t" style="left:373.0px;top:9px;font-size:11px;line-height:13px;color:#fff;-webkit-text-stroke:0.08px;letter-spacing:-0.19px;">Release Notes</span>
<span class="t" style="left:468.0px;top:9px;font-size:11px;line-height:13px;color:#fff;-webkit-text-stroke:0.08px;letter-spacing:-0.06px;">Version Information</span>
<span class="t" style="left:669.0px;top:9px;font-size:11px;line-height:13px;color:#fff;-webkit-text-stroke:0.08px;letter-spacing:-0.08px;">Help</span>
<span class="t" style="left:10.75px;top:39px;font-size:11px;line-height:13px;color:#fff;font-weight:700;-webkit-text-stroke:0.2px;letter-spacing:-0.54px;">SERVER SETTINGS</span>
<span class="t" style="left:20.5px;top:55px;font-size:11px;line-height:13px;color:#fff;-webkit-text-stroke:0.08px;letter-spacing:-0.1px;">Settings</span>
<span class="t" style="left:20.5px;top:70px;font-size:11px;line-height:13px;color:#fff;-webkit-text-stroke:0.08px;letter-spacing:-0.33px;">Caching</span>
<span class="t" style="left:20.5px;top:85px;font-size:11px;line-height:13px;color:#fff;-webkit-text-stroke:0.08px;letter-spacing:-0.23px;">Client Variables</span>
<span class="t" style="left:20.0px;top:100px;font-size:11px;line-height:13px;color:#fff;-webkit-text-stroke:0.08px;letter-spacing:-0.23px;">Memory Variables</span>
<span class="t" style="left:20.0px;top:115px;font-size:11px;line-height:13px;color:#fff;-webkit-text-stroke:0.08px;letter-spacing:-0.31px;">Mappings</span>
<span class="t" style="left:20.0px;top:130px;font-size:11px;line-height:13px;color:#fff;-webkit-text-stroke:0.08px;letter-spacing:-0.25px;">Mail Server</span>
<span class="t" style="left:20.5px;top:145px;font-size:11px;line-height:13px;color:#fff;-webkit-text-stroke:0.08px;letter-spacing:0.01px;">Charting</span>
<span class="t" style="left:20.75px;top:160px;font-size:11px;line-height:13px;color:#fff;-webkit-text-stroke:0.08px;letter-spacing:-0.27px;">Java and JVM</span>
<span class="t" style="left:21.0px;top:175px;font-size:11px;line-height:13px;color:#fff;-webkit-text-stroke:0.08px;letter-spacing:-0.21px;">Archives and Deployment</span>
<span class="t" style="left:20.5px;top:190px;font-size:11px;line-height:13px;color:#fff;-webkit-text-stroke:0.08px;letter-spacing:-0.31px;">Settings Summary</span>
<span class="t" style="left:10.25px;top:208px;font-size:11px;line-height:13px;color:#fff;font-weight:700;-webkit-text-stroke:0.2px;letter-spacing:-0.12px;">DATA &amp; SERVICES</span>
<span class="t" style="left:20.0px;top:224px;font-size:11px;line-height:13px;color:#5CFF5C;-webkit-text-stroke:0.08px;letter-spacing:-0.16px;text-decoration:underline;">Data Sources</span>
<span class="t" style="left:21.0px;top:239px;font-size:11px;line-height:13px;color:#fff;-webkit-text-stroke:0.08px;letter-spacing:-0.16px;">Verity Collections</span>
<span class="t" style="left:21.0px;top:254px;font-size:11px;line-height:13px;color:#fff;-webkit-text-stroke:0.08px;letter-spacing:-0.15px;">Verity K2 Server</span>
<span class="t" style="left:21.0px;top:269px;font-size:11px;line-height:13px;color:#fff;-webkit-text-stroke:0.08px;letter-spacing:-0.28px;">Web Services</span>
<span class="t" style="left:10.25px;top:287px;font-size:11px;line-height:13px;color:#fff;font-weight:700;-webkit-text-stroke:0.2px;letter-spacing:-0.53px;">DEBUGGING &amp; LOGGING</span>
<span class="t" style="left:20.0px;top:303px;font-size:11px;line-height:13px;color:#fff;-webkit-text-stroke:0.08px;letter-spacing:-0.16px;">Debugging Settings</span>
<span class="t" style="left:20.0px;top:318px;font-size:11px;line-height:13px;color:#fff;-webkit-text-stroke:0.08px;letter-spacing:-0.16px;">Debugging IP Addresses</span>
<span class="t" style="left:20.0px;top:333px;font-size:11px;line-height:13px;color:#fff;-webkit-text-stroke:0.08px;letter-spacing:-0.17px;">Logging Settings</span>
<span class="t" style="left:20.0px;top:348px;font-size:11px;line-height:13px;color:#fff;-webkit-text-stroke:0.08px;letter-spacing:-0.37px;">Log Files</span>
<span class="t" style="left:20.5px;top:363px;font-size:11px;line-height:13px;color:#fff;-webkit-text-stroke:0.08px;letter-spacing:-0.29px;">Scheduled Tasks</span>
<span class="t" style="left:20.5px;top:378px;font-size:11px;line-height:13px;color:#fff;-webkit-text-stroke:0.08px;letter-spacing:-0.3px;">System Probes</span>
<span class="t" style="left:20.5px;top:393px;font-size:11px;line-height:13px;color:#fff;-webkit-text-stroke:0.08px;letter-spacing:-0.18px;">Code Analyzer</span>
<span class="t" style="left:10.25px;top:411px;font-size:11px;line-height:13px;color:#fff;font-weight:700;-webkit-text-stroke:0.2px;letter-spacing:-0.59px;">EXTENSIONS</span>
<span class="t" style="left:20.75px;top:429px;font-size:11px;line-height:13px;color:#fff;-webkit-text-stroke:0.08px;letter-spacing:-0.04px;">Java Applets</span>
<span class="t" style="left:20.5px;top:444px;font-size:11px;line-height:13px;color:#fff;-webkit-text-stroke:0.08px;letter-spacing:-0.42px;">CFX Tags</span>
<span class="t" style="left:20.5px;top:459px;font-size:11px;line-height:13px;color:#fff;-webkit-text-stroke:0.08px;letter-spacing:-0.17px;">Custom Tag Paths</span>
<span class="t" style="left:20.5px;top:474px;font-size:11px;line-height:13px;color:#fff;-webkit-text-stroke:0.08px;letter-spacing:-0.31px;">CORBA Connectors</span>
<span class="t" style="left:10.75px;top:492px;font-size:11px;line-height:13px;color:#fff;font-weight:700;-webkit-text-stroke:0.2px;letter-spacing:-0.57px;">SECURITY</span>
<span class="t" style="left:20.5px;top:510px;font-size:11px;line-height:13px;color:#fff;-webkit-text-stroke:0.08px;letter-spacing:-0.32px;">CF Admin Password</span>
<span class="t" style="left:20.0px;top:525px;font-size:11px;line-height:13px;color:#fff;-webkit-text-stroke:0.08px;letter-spacing:-0.4px;">RDS Password</span>
<span class="t" style="left:20.5px;top:540px;font-size:11px;line-height:13px;color:#fff;-webkit-text-stroke:0.08px;letter-spacing:-0.2px;">Sandbox Security</span>
<span class="t" style="left:199.0px;top:45px;font-size:14px;line-height:16px;color:#333;font-weight:700;letter-spacing:0.27px;">Data Sources</span>
<span class="t" style="left:199.0px;top:105px;font-size:12px;line-height:14px;color:#111;letter-spacing:0.5px;">Add and manage your data source connections and Data Source Names (DSNs).</span>
<span class="t" style="left:198.75px;top:122px;font-size:12px;line-height:14px;color:#111;letter-spacing:0.51px;">You use a DSN to connect ColdFusion to a variety of data sources.</span>
<span class="t" style="left:210.75px;top:159px;font-size:11px;line-height:13px;color:#fff;font-weight:700;-webkit-text-stroke:0.2px;letter-spacing:0.29px;">Add New Data Source</span>
<span class="t" style="left:207.0px;top:181px;font-size:11px;line-height:13px;color:#333;-webkit-text-stroke:0.2px;letter-spacing:-0.27px;">Data Source Name</span>
<span class="t" style="left:207.0px;top:201px;font-size:11px;line-height:13px;color:#333;-webkit-text-stroke:0.2px;letter-spacing:0.05px;">Driver</span>
<span class="t" style="left:311.0px;top:202px;font-size:11px;line-height:13px;color:#000;-webkit-text-stroke:0.2px;letter-spacing:-0.04px;">Please select a valid driver type.</span>
<span class="t" style="left:240.0px;top:226px;font-size:11px;line-height:13px;color:#000;-webkit-text-stroke:0.2px;letter-spacing:-0.38px;">Add</span>
<span class="t" style="left:207.5px;top:268px;font-size:11px;line-height:13px;color:#fff;font-weight:700;-webkit-text-stroke:0.2px;letter-spacing:0.39px;">Connected Data Sources</span>
<span class="t" style="left:208.0px;top:291px;font-size:11px;line-height:13px;color:#333;-webkit-text-stroke:0.2px;letter-spacing:-0.12px;">Actions</span>
<span class="t" style="left:281.8px;top:291px;font-size:11px;line-height:13px;color:#000;-webkit-text-stroke:0.2px;letter-spacing:-0.24px;text-decoration:underline;">Data Source Name </span>
<span class="t" style="left:433.2px;top:291px;font-size:11px;line-height:13px;color:#000;-webkit-text-stroke:0.2px;letter-spacing:-0.11px;text-decoration:underline;">Driver </span>
<span class="t" style="left:663.5px;top:291px;font-size:11px;line-height:13px;color:#333;-webkit-text-stroke:0.2px;letter-spacing:0.05px;">Status</span>
<span class="t" style="left:282.5px;top:315px;font-size:11px;line-height:13px;color:#002E99;-webkit-text-stroke:0.2px;letter-spacing:-0.08px;">cfsnippets</span>
<span class="t" style="left:433.5px;top:315px;font-size:11px;line-height:13px;color:#333;-webkit-text-stroke:0.2px;letter-spacing:-0.63px;">ODBC Socket</span>
<span class="t" style="left:282.5px;top:343px;font-size:11px;line-height:13px;color:#002E99;-webkit-text-stroke:0.2px;letter-spacing:-0.03px;">CompanyInfo</span>
<span class="t" style="left:433.5px;top:343px;font-size:11px;line-height:13px;color:#333;-webkit-text-stroke:0.2px;letter-spacing:-0.63px;">ODBC Socket</span>
<span class="t" style="left:282.5px;top:371px;font-size:11px;line-height:13px;color:#002E99;-webkit-text-stroke:0.2px;letter-spacing:-0.21px;">exampleapps</span>
<span class="t" style="left:433.5px;top:371px;font-size:11px;line-height:13px;color:#333;-webkit-text-stroke:0.2px;letter-spacing:-0.63px;">ODBC Socket</span>
<span class="t" style="left:282.25px;top:399px;font-size:11px;line-height:13px;color:#002E99;-webkit-text-stroke:0.2px;letter-spacing:0.14px;">internet</span>
<span class="t" style="left:433.0px;top:399px;font-size:11px;line-height:13px;color:#333;-webkit-text-stroke:0.2px;letter-spacing:-0.15px;">Microsoft Access</span>
<span class="t" style="left:282.0px;top:427px;font-size:11px;line-height:13px;color:#002E99;-webkit-text-stroke:0.2px;letter-spacing:0.36px;">Intranet</span>
<span class="t" style="left:433.0px;top:427px;font-size:11px;line-height:13px;color:#333;-webkit-text-stroke:0.2px;letter-spacing:-0.15px;">Microsoft Access</span>
<span class="t" style="left:282.5px;top:455px;font-size:11px;line-height:13px;color:#002E99;-webkit-text-stroke:0.2px;letter-spacing:-0.5px;">ODBCTest</span>
<span class="t" style="left:433.0px;top:455px;font-size:11px;line-height:13px;color:#333;-webkit-text-stroke:0.2px;letter-spacing:-0.15px;">Microsoft Access</span>
<span class="t" style="left:282.5px;top:483px;font-size:11px;line-height:13px;color:#002E99;-webkit-text-stroke:0.2px;letter-spacing:-0.46px;">OracleDB</span>
<span class="t" style="left:433.5px;top:483px;font-size:11px;line-height:13px;color:#333;-webkit-text-stroke:0.2px;letter-spacing:-0.28px;">Oracle</span>
<span class="t" style="left:237.5px;top:512px;font-size:11px;line-height:13px;color:#000;-webkit-text-stroke:0.2px;letter-spacing:-0.1px;">Verify All Connections</span>
<svg style="left:41px;top:233px" width="17" height="22" shape-rendering="crispEdges"><rect x="5" y="0" width="2" height="1" fill="#000"/><rect x="4" y="1" width="1" height="1" fill="#000"/><rect x="5" y="1" width="2" height="1" fill="#fff"/><rect x="7" y="1" width="1" height="1" fill="#000"/><rect x="4" y="2" width="1" height="1" fill="#000"/><rect x="5" y="2" width="2" height="1" fill="#fff"/><rect x="7" y="2" width="1" height="1" fill="#000"/><rect x="4" y="3" width="1" height="1" fill="#000"/><rect x="5" y="3" width="2" height="1" fill="#fff"/><rect x="7" y="3" width="1" height="1" fill="#000"/><rect x="4" y="4" width="1" height="1" fill="#000"/><rect x="5" y="4" width="2" height="1" fill="#fff"/><rect x="7" y="4" width="1" height="1" fill="#000"/><rect x="4" y="5" width="1" height="1" fill="#000"/><rect x="5" y="5" width="2" height="1" fill="#fff"/><rect x="7" y="5" width="3" height="1" fill="#000"/><rect x="4" y="6" width="1" height="1" fill="#000"/><rect x="5" y="6" width="2" height="1" fill="#fff"/><rect x="7" y="6" width="1" height="1" fill="#000"/><rect x="8" y="6" width="2" height="1" fill="#fff"/><rect x="10" y="6" width="3" height="1" fill="#000"/><rect x="4" y="7" width="1" height="1" fill="#000"/><rect x="5" y="7" width="2" height="1" fill="#fff"/><rect x="7" y="7" width="1" height="1" fill="#000"/><rect x="8" y="7" width="2" height="1" fill="#fff"/><rect x="10" y="7" width="1" height="1" fill="#000"/><rect x="11" y="7" width="2" height="1" fill="#fff"/><rect x="13" y="7" width="2" height="1" fill="#000"/><rect x="4" y="8" width="1" height="1" fill="#000"/><rect x="5" y="8" width="2" height="1" fill="#fff"/><rect x="7" y="8" width="1" height="1" fill="#000"/><rect x="8" y="8" width="2" height="1" fill="#fff"/><rect x="10" y="8" width="1" height="1" fill="#000"/><rect x="11" y="8" width="2" height="1" fill="#fff"/><rect x="13" y="8" width="1" height="1" fill="#000"/><rect x="14" y="8" width="1" height="1" fill="#fff"/><rect x="15" y="8" width="1" height="1" fill="#000"/><rect x="0" y="9" width="3" height="1" fill="#000"/><rect x="4" y="9" width="1" height="1" fill="#000"/><rect x="5" y="9" width="2" height="1" fill="#fff"/><rect x="7" y="9" width="1" height="1" fill="#000"/><rect x="8" y="9" width="2" height="1" fill="#fff"/><rect x="10" y="9" width="1" height="1" fill="#000"/><rect x="11" y="9" width="2" height="1" fill="#fff"/><rect x="13" y="9" width="1" height="1" fill="#000"/><rect x="14" y="9" width="2" height="1" fill="#fff"/><rect x="16" y="9" width="1" height="1" fill="#000"/><rect x="0" y="10" width="1" height="1" fill="#000"/><rect x="1" y="10" width="2" height="1" fill="#fff"/><rect x="3" y="10" width="2" height="1" fill="#000"/><rect x="5" y="10" width="8" height="1" fill="#fff"/><rect x="13" y="10" width="1" height="1" fill="#000"/><rect x="14" y="10" width="2" height="1" fill="#fff"/><rect x="16" y="10" width="1" height="1" fill="#000"/><rect x="0" y="11" width="1" height="1" fill="#000"/><rect x="1" y="11" width="3" height="1" fill="#fff"/><rect x="4" y="11" width="1" height="1" fill="#000"/><rect x="5" y="11" width="11" height="1" fill="#fff"/><rect x="16" y="11" width="1" height="1" fill="#000"/><rect x="1" y="12" width="1" height="1" fill="#000"/><rect x="2" y="12" width="2" height="1" fill="#fff"/><rect x="4" y="12" width="1" height="1" fill="#000"/><rect x="5" y="12" width="11" height="1" fill="#fff"/><rect x="16" y="12" width="1" height="1" fill="#000"/><rect x="2" y="13" width="1" height="1" fill="#000"/><rect x="3" y="13" width="13" height="1" fill="#fff"/><rect x="16" y="13" width="1" height="1" fill="#000"/><rect x="2" y="14" width="1" height="1" fill="#000"/><rect x="3" y="14" width="13" height="1" fill="#fff"/><rect x="16" y="14" width="1" height="1" fill="#000"/><rect x="3" y="15" width="1" height="1" fill="#000"/><rect x="4" y="15" width="11" height="1" fill="#fff"/><rect x="15" y="15" width="1" height="1" fill="#000"/><rect x="3" y="16" width="1" height="1" fill="#000"/><rect x="4" y="16" width="11" height="1" fill="#fff"/><rect x="15" y="16" width="1" height="1" fill="#000"/><rect x="4" y="17" width="1" height="1" fill="#000"/><rect x="5" y="17" width="9" height="1" fill="#fff"/><rect x="14" y="17" width="1" height="1" fill="#000"/><rect x="4" y="18" width="1" height="1" fill="#000"/><rect x="5" y="18" width="9" height="1" fill="#fff"/><rect x="14" y="18" width="1" height="1" fill="#000"/><rect x="5" y="19" width="1" height="1" fill="#000"/><rect x="6" y="19" width="7" height="1" fill="#fff"/><rect x="13" y="19" width="1" height="1" fill="#000"/><rect x="5" y="20" width="1" height="1" fill="#000"/><rect x="6" y="20" width="7" height="1" fill="#fff"/><rect x="13" y="20" width="1" height="1" fill="#000"/><rect x="5" y="21" width="9" height="1" fill="#000"/></svg>
</div></body></html>
